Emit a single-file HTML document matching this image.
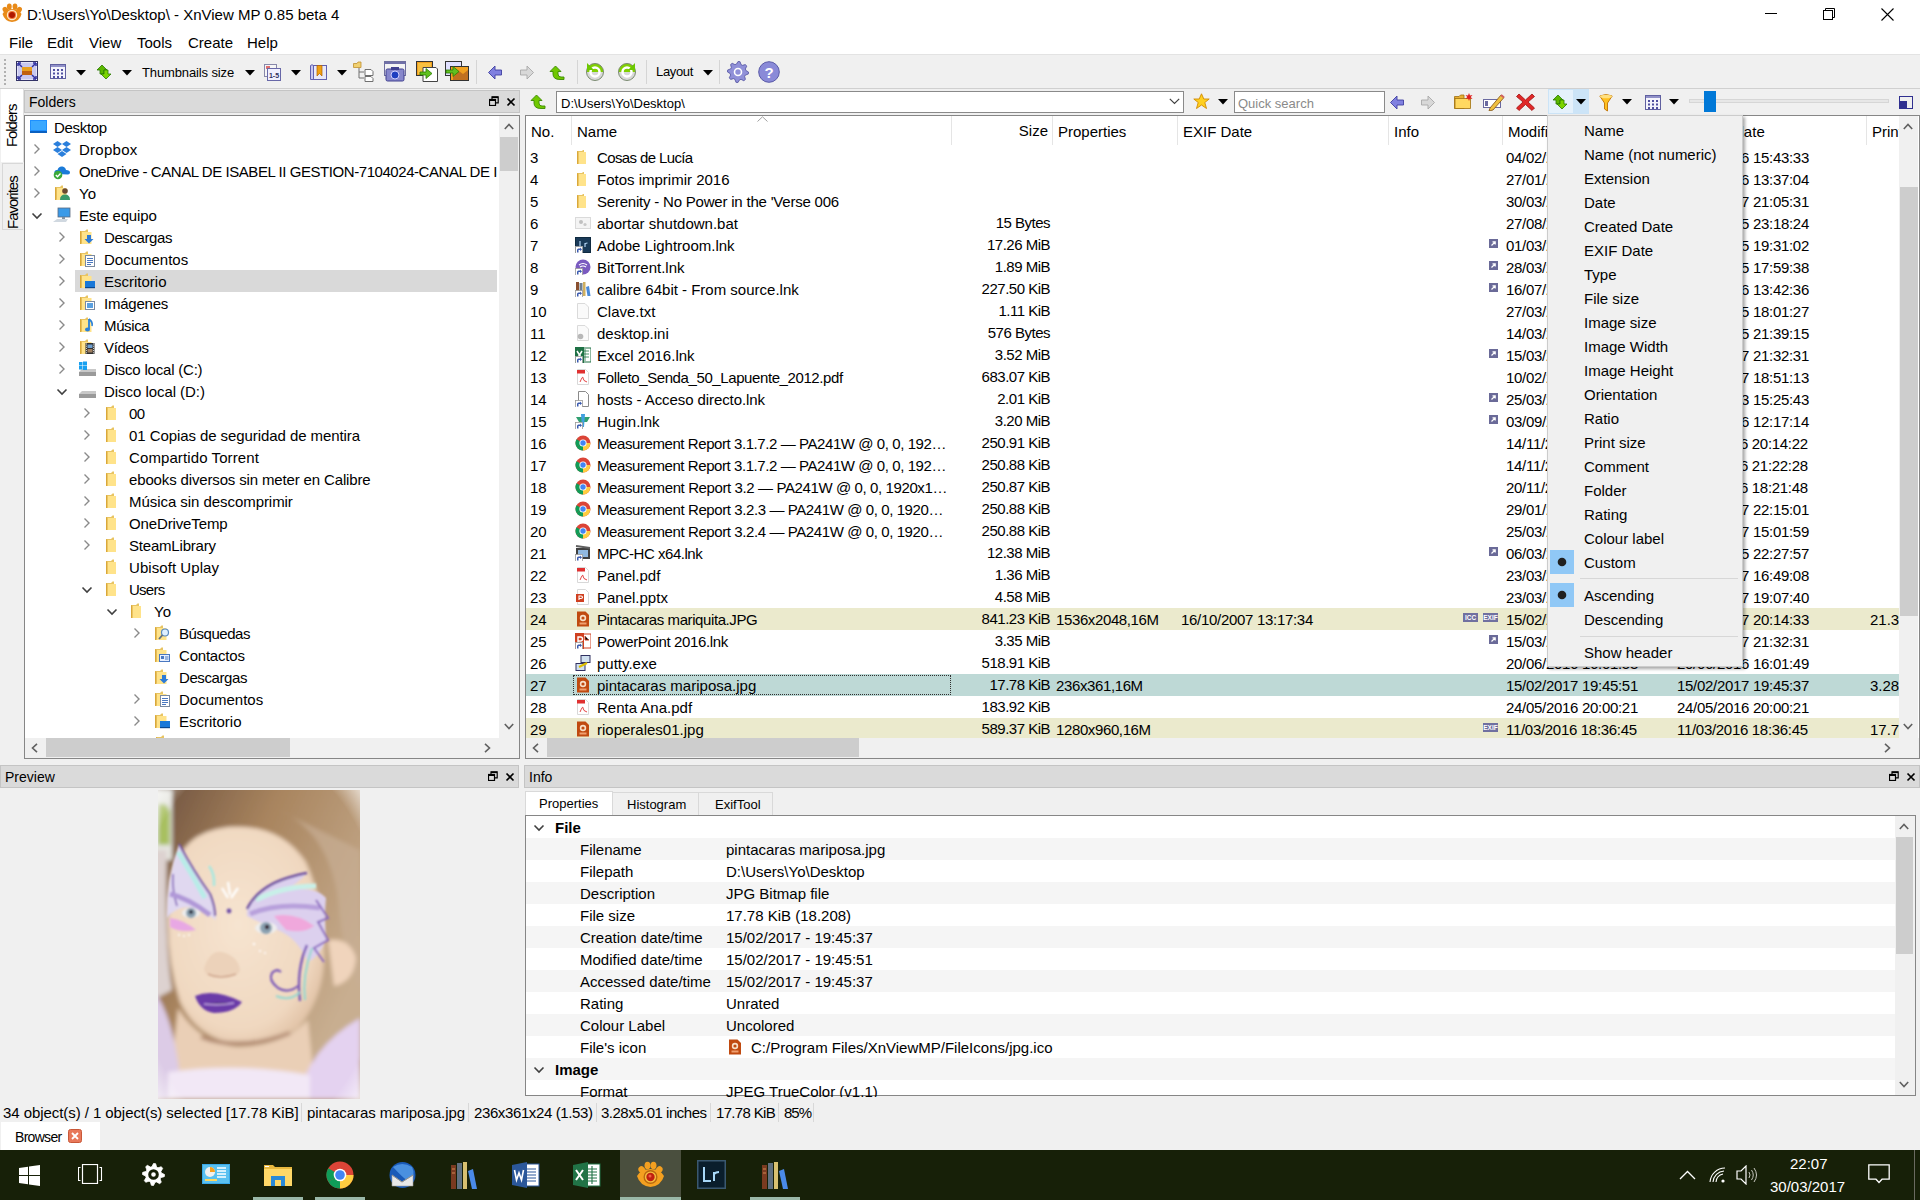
<!DOCTYPE html><html><head><meta charset="utf-8"><title>XnView MP</title><style>html,body{margin:0;padding:0;width:1920px;height:1200px;overflow:hidden;background:#f0f0f0;}body{position:relative;font-family:"Liberation Sans", sans-serif;}.t{position:absolute;white-space:nowrap;line-height:1;}.r{position:absolute;}</style></head><body><div class="r" style="left:0px;top:0px;width:1920px;height:54px;background:#fff;"></div><div class="r" style="left:0px;top:54px;width:1920px;height:1px;background:#e3e3e3;"></div><svg class="r" style="left:0px;top:0px" width="26" height="26" viewBox="0 0 26 26"><g fill="#e88a18"><ellipse cx="5.5" cy="10" rx="2.6" ry="3.4" transform="rotate(-35 5.5 10)"/><ellipse cx="9.3" cy="6.6" rx="2.4" ry="3.2"/><ellipse cx="15" cy="6.6" rx="2.4" ry="3.2"/><ellipse cx="19" cy="10" rx="2.6" ry="3.4" transform="rotate(35 19 10)"/><path d="M2.5 14Q5 9 12 9Q19 9 21.5 14Q20 21 12 22Q4.5 21 2.5 14Z"/></g><circle cx="12" cy="15" r="5.2" fill="#ffe8c8"/><circle cx="12" cy="15" r="4" fill="#f07838"/><circle cx="12" cy="15" r="3" fill="#b01800"/></svg><div class="t" style="left:27px;top:7px;font-size:15px;color:#000;">D:\Users\Yo\Desktop\ - XnView MP 0.85 beta 4</div><div class="r" style="left:1765px;top:13px;width:12px;height:1px;background:#000;"></div><svg class="r" style="left:1823px;top:8px" width="14" height="14" viewBox="0 0 14 14"><rect x="0.5" y="2.5" width="9" height="9" fill="none" stroke="#000"/><path d="M2.5 2.5V0.5H11.5V9.5H9.5" fill="none" stroke="#000"/></svg><svg class="r" style="left:1881px;top:8px" width="13" height="13" viewBox="0 0 13 13"><path d="M0.5 0.5L12.5 12.5M12.5 0.5L0.5 12.5" stroke="#000" stroke-width="1.1"/></svg><div class="t" style="left:9px;top:35px;font-size:15px;color:#000;">File</div><div class="t" style="left:47px;top:35px;font-size:15px;color:#000;">Edit</div><div class="t" style="left:89px;top:35px;font-size:15px;color:#000;">View</div><div class="t" style="left:137px;top:35px;font-size:15px;color:#000;">Tools</div><div class="t" style="left:188px;top:35px;font-size:15px;color:#000;">Create</div><div class="t" style="left:247px;top:35px;font-size:15px;color:#000;">Help</div><div class="r" style="left:0px;top:55px;width:1920px;height:33px;background:#f0f0f0;"></div><div class="r" style="left:0px;top:88px;width:1920px;height:1px;background:#d0d0d0;"></div><div class="r" style="left:4px;top:59px;width:2px;height:2px;background:#b0b0b0;"></div><div class="r" style="left:4px;top:63px;width:2px;height:2px;background:#b0b0b0;"></div><div class="r" style="left:4px;top:67px;width:2px;height:2px;background:#b0b0b0;"></div><div class="r" style="left:4px;top:71px;width:2px;height:2px;background:#b0b0b0;"></div><div class="r" style="left:4px;top:75px;width:2px;height:2px;background:#b0b0b0;"></div><div class="r" style="left:4px;top:79px;width:2px;height:2px;background:#b0b0b0;"></div><div class="r" style="left:4px;top:83px;width:2px;height:2px;background:#b0b0b0;"></div><svg class="r" style="left:16px;top:61px" width="22" height="20" viewBox="0 0 22 20"><rect x="0.5" y="0.5" width="21" height="19" fill="#fff" stroke="#333366"/><rect x="1.5" y="1.5" width="19" height="17" fill="#c8c8f0"/><rect x="6" y="6" width="10" height="8" fill="#e8a020"/><rect x="6" y="10" width="10" height="4" fill="#c06010"/><path d="M2 2L6 6M20 2L16 6M2 18L6 14M20 18L16 14" stroke="#3030a0" stroke-width="1.5"/><path d="M2 2h3M2 2v3M20 2h-3M20 2v3M2 18h3M2 18v-3M20 18h-3M20 18v-3" stroke="#3030a0" stroke-width="1.5"/></svg><svg class="r" style="left:50px;top:64px" width="16" height="15" viewBox="0 0 16 15"><rect x="0.5" y="0.5" width="15" height="14" fill="#f4f4fc" stroke="#6060a0"/><rect x="1" y="1" width="14" height="2" fill="#9090c8"/><rect x="3" y="5.0" width="2" height="2" fill="#5050a0"/><rect x="3" y="8.5" width="2" height="2" fill="#5050a0"/><rect x="3" y="12.0" width="2" height="2" fill="#5050a0"/><rect x="7" y="5.0" width="2" height="2" fill="#5050a0"/><rect x="7" y="8.5" width="2" height="2" fill="#5050a0"/><rect x="7" y="12.0" width="2" height="2" fill="#5050a0"/><rect x="11" y="5.0" width="2" height="2" fill="#5050a0"/><rect x="11" y="8.5" width="2" height="2" fill="#5050a0"/><rect x="11" y="12.0" width="2" height="2" fill="#5050a0"/></svg><svg class="r" style="left:76px;top:70px" width="10" height="6" viewBox="0 0 10 6"><path d="M0 0H10L5 5.5Z" fill="#000"/></svg><svg class="r" style="left:96px;top:64px" width="16" height="16" viewBox="0 0 16 16"><path d="M1 6L6 1L11 6H8V10H4V6Z" fill="#5cb800" stroke="#2a7a00" stroke-width="0.8"/><path d="M5 10L10 15L15 10H12V6H8V10Z" fill="#7cd400" stroke="#2a7a00" stroke-width="0.8"/></svg><svg class="r" style="left:122px;top:70px" width="10" height="6" viewBox="0 0 10 6"><path d="M0 0H10L5 5.5Z" fill="#000"/></svg><div class="t" style="left:142px;top:66px;font-size:13px;color:#000;letter-spacing:-0.129px;">Thumbnails size</div><svg class="r" style="left:245px;top:70px" width="10" height="6" viewBox="0 0 10 6"><path d="M0 0H10L5 5.5Z" fill="#000"/></svg><svg class="r" style="left:264px;top:64px" width="17" height="17" viewBox="0 0 17 17"><rect x="0.5" y="0.5" width="12" height="12" fill="#f6f6f6" stroke="#8888aa"/><rect x="2" y="2" width="4" height="3" fill="#e07070"/><rect x="3.5" y="4.5" width="13" height="12" fill="#f0f0ff" stroke="#6868a8"/><text x="10" y="14" font-size="7" font-family="Liberation Sans" font-weight="bold" text-anchor="middle" fill="#303060">1-5</text></svg><svg class="r" style="left:291px;top:70px" width="10" height="6" viewBox="0 0 10 6"><path d="M0 0H10L5 5.5Z" fill="#000"/></svg><svg class="r" style="left:310px;top:64px" width="17" height="16" viewBox="0 0 17 16"><path d="M0.5 1.5Q2 0 3.5 1.5V15.5H0.5Z" fill="#c8c8f0" stroke="#6060b0"/><rect x="3.5" y="1.5" width="13" height="14" fill="#e8e8f8" stroke="#6060b0"/><path d="M7 1.5V12L9.5 9.5L12 12V1.5Z" fill="#f0a010" stroke="#b06000" stroke-width="0.7"/></svg><svg class="r" style="left:337px;top:70px" width="10" height="6" viewBox="0 0 10 6"><path d="M0 0H10L5 5.5Z" fill="#000"/></svg><svg class="r" style="left:353px;top:61px" width="22" height="21" viewBox="0 0 22 21"><path d="M0.5 2.5H4L5 1H8V6.5H0.5Z" fill="#f0d070" stroke="#c09030" stroke-width="0.8"/><path d="M6 7V17H11M6 11H11" fill="none" stroke="#707070"/><path d="M12 8.5H18L20 10.5V14.5H12Z" fill="#fff" stroke="#707070"/><path d="M12 15.5H18L20 17.5V20.5H12Z" fill="#fff" stroke="#707070"/></svg><svg class="r" style="left:384px;top:61px" width="22" height="21" viewBox="0 0 22 21"><rect x="0.5" y="0.5" width="21" height="14" fill="#f4f4f4" stroke="#7070a0"/><rect x="1" y="1" width="20" height="2" fill="#7070a8"/><rect x="2" y="8" width="18" height="12" rx="1.5" fill="#8888cc" stroke="#404090"/><rect x="7" y="6" width="8" height="3" fill="#404090"/><circle cx="11" cy="14" r="4" fill="#2040c0" stroke="#d0d0ff"/></svg><svg class="r" style="left:416px;top:61px" width="22" height="21" viewBox="0 0 22 21"><rect x="0.5" y="0.5" width="16" height="14" fill="#f0a020" stroke="#333"/><rect x="2" y="2" width="13" height="11" fill="#f8c040"/><path d="M7 6.5H20L21.5 8V20.5H7Z" fill="#fff" stroke="#444"/><path d="M4 11H10V7.5L16 12.5L10 17.5V14H4Z" fill="#60c020" stroke="#2a7a00" stroke-width="0.8"/></svg><svg class="r" style="left:445px;top:61px" width="25" height="21" viewBox="0 0 25 21"><rect x="0.5" y="0.5" width="16" height="14" fill="#e0e0ff" stroke="#333"/><rect x="5.5" y="5.5" width="18" height="14" fill="#f0a020" stroke="#333"/><path d="M8 16L14 10L18 13L23 9V19H8Z" fill="#c07020"/><path d="M1 9H8V5.5L14 10.5L8 15.5V12H1Z" fill="#60c020" stroke="#2a7a00" stroke-width="0.8"/></svg><div class="r" style="left:476px;top:60px;width:1px;height:24px;background:#d5d5d5;"></div><svg class="r" style="left:488px;top:65px" width="14" height="15" viewBox="0 0 14 15"><path d="M0.5 7.5L7 1V5H13.5V10H7V14Z" fill="#8080e0" stroke="#4040a0" stroke-width="0.9"/></svg><svg class="r" style="left:520px;top:65px" width="14" height="15" viewBox="0 0 14 15"><path d="M13.5 7.5L7 1V5H0.5V10H7V14Z" fill="#d8d8d8" stroke="#a8a8a8" stroke-width="0.9"/></svg><svg class="r" style="left:549px;top:65px" width="16" height="15" viewBox="0 0 16 15"><path d="M1 6.5L6.5 1L12 6.5H9V9Q9 12 12 12H15V14.5H11Q4 14.5 4 9V6.5Z" fill="#70c800" stroke="#3a8a00" stroke-width="0.9"/></svg><div class="r" style="left:577px;top:60px;width:1px;height:24px;background:#d5d5d5;"></div><svg class="r" style="left:585px;top:62px" width="20" height="20" viewBox="0 0 20 20"><defs><linearGradient id="rg585" x1="0" y1="0" x2="0" y2="1"><stop offset="0.5" stop-color="#80d000"/><stop offset="0.5" stop-color="#d8d8d8"/></linearGradient></defs><circle cx="10" cy="10" r="8.5" fill="url(#rg585)" stroke="#7a8a70"/><circle cx="10" cy="10" r="4.5" fill="none" stroke="#fff" stroke-width="2.5"/><path d="M2 1V8H9Z" fill="#6cc800"/></svg><svg class="r" style="left:617px;top:62px" width="20" height="20" viewBox="0 0 20 20"><defs><linearGradient id="rg617" x1="0" y1="0" x2="0" y2="1"><stop offset="0.5" stop-color="#80d000"/><stop offset="0.5" stop-color="#d8d8d8"/></linearGradient></defs><circle cx="10" cy="10" r="8.5" fill="url(#rg617)" stroke="#7a8a70"/><circle cx="10" cy="10" r="4.5" fill="none" stroke="#fff" stroke-width="2.5"/><path d="M18 1V8H11Z" fill="#6cc800"/></svg><div class="r" style="left:646px;top:60px;width:1px;height:24px;background:#d5d5d5;"></div><div class="t" style="left:656px;top:65px;font-size:13px;color:#000;letter-spacing:-0.341px;">Layout</div><svg class="r" style="left:703px;top:70px" width="10" height="6" viewBox="0 0 10 6"><path d="M0 0H10L5 5.5Z" fill="#000"/></svg><div class="r" style="left:719px;top:60px;width:1px;height:24px;background:#d5d5d5;"></div><svg class="r" style="left:727px;top:61px" width="22" height="22" viewBox="0 0 22 22"><polygon points="21.50,11.00 21.30,13.05 18.39,14.06 17.65,15.44 18.42,18.42 16.83,19.73 14.06,18.39 12.56,18.85 11.00,21.50 8.95,21.30 7.94,18.39 6.56,17.65 3.58,18.42 2.27,16.83 3.61,14.06 3.15,12.56 0.50,11.00 0.70,8.95 3.61,7.94 4.35,6.56 3.58,3.58 5.17,2.27 7.94,3.61 9.44,3.15 11.00,0.50 13.05,0.70 14.06,3.61 15.44,4.35 18.42,3.58 19.73,5.17 18.39,7.94 18.85,9.44" fill="#9090d8" stroke="#5050a0" stroke-width="0.8"/><circle cx="11" cy="11" r="3.5" fill="none" stroke="#fff" stroke-width="1.6"/></svg><svg class="r" style="left:758px;top:61px" width="22" height="22" viewBox="0 0 22 22"><circle cx="11" cy="11" r="10.3" fill="#8a8ad8" stroke="#5a5aa8"/><text x="11" y="16.5" font-size="15" font-weight="bold" font-family="Liberation Sans" text-anchor="middle" fill="#fff">?</text></svg><div class="r" style="left:1px;top:89px;width:23px;height:73px;background:#fff;"></div><div class="r" style="left:23px;top:89px;width:1px;height:73px;background:#e0e0e0;"></div><div class="r" style="left:2px;top:163px;width:21px;height:67px;background:#f0f0f0;border:1px solid #d8d8d8;border-right:none;box-sizing:border-box;"></div><div class="t" style="left:4px;top:147px;font-size:15px;letter-spacing:-1.1px;transform:rotate(-90deg);transform-origin:0 0;">Folders</div><div class="t" style="left:5px;top:229px;font-size:15px;letter-spacing:-1px;transform:rotate(-90deg);transform-origin:0 0;">Favorites</div><div class="r" style="left:24px;top:90px;width:496px;height:23px;background:#dadada;border:1px solid #c4c4c4;box-sizing:border-box;"></div><div class="t" style="left:29px;top:95px;font-size:14px;color:#000;">Folders</div><svg class="r" style="left:489px;top:96px" width="10" height="10" viewBox="0 0 10 10"><rect x="0.5" y="3.5" width="6" height="6" fill="none" stroke="#000" stroke-width="1.2"/><path d="M3 3.5V0.8H9.2V6.8H6.5" fill="none" stroke="#000" stroke-width="1.2"/><rect x="0.5" y="3.5" width="6" height="1.5" fill="#000"/><rect x="3" y="0.6" width="6" height="1.5" fill="#000"/></svg><svg class="r" style="left:506px;top:97px" width="10" height="10" viewBox="0 0 10 10"><path d="M1.5 1.5L8.5 8.5M8.5 1.5L1.5 8.5" stroke="#000" stroke-width="1.7"/></svg><div class="r" style="left:24px;top:115px;width:496px;height:644px;background:#fff;border:1px solid #868686;box-sizing:border-box;"></div><div class="r" style="left:499px;top:116px;width:20px;height:622px;background:#f0f0f0;"></div><svg class="r" style="left:504px;top:123px" width="10" height="7" viewBox="0 0 10 7"><path d="M0.8 6L5 1.5L9.2 6" fill="none" stroke="#606060" stroke-width="1.6"/></svg><div class="r" style="left:500px;top:137px;width:18px;height:34px;background:#cdcdcd;"></div><svg class="r" style="left:504px;top:723px" width="10" height="7" viewBox="0 0 10 7"><path d="M0.8 1L5 5.5L9.2 1" fill="none" stroke="#606060" stroke-width="1.6"/></svg><div class="r" style="left:25px;top:738px;width:474px;height:20px;background:#f0f0f0;"></div><div class="r" style="left:499px;top:738px;width:20px;height:20px;background:#f0f0f0;"></div><div class="r" style="left:46px;top:738px;width:244px;height:19px;background:#cdcdcd;"></div><svg class="r" style="left:31px;top:743px" width="7" height="10" viewBox="0 0 7 10"><path d="M6 0.8L1.5 5L6 9.2" fill="none" stroke="#606060" stroke-width="1.6"/></svg><svg class="r" style="left:484px;top:743px" width="7" height="10" viewBox="0 0 7 10"><path d="M1 0.8L5.5 5L1 9.2" fill="none" stroke="#606060" stroke-width="1.6"/></svg><div class="r" style="left:25px;top:116px;width:474px;height:622px;overflow:hidden;"><svg class="r" style="left:5px;top:4px" width="17" height="13" viewBox="0 0 17 13"><rect x="0" y="0" width="17" height="12" fill="#1e90ff"/><rect x="1" y="1" width="15" height="9" fill="#3aa8ff"/><rect x="0" y="11" width="17" height="2" fill="#0a60c0"/></svg><div class="t" style="left:29px;top:4px;font-size:15px;color:#000;letter-spacing:-0.319px;">Desktop</div><svg class="r" style="left:8px;top:27px" width="8" height="12" viewBox="0 0 8 12"><path d="M1.5 1.5L6 6L1.5 10.5" fill="none" stroke="#8a8a8a" stroke-width="1.4"/></svg><svg class="r" style="left:28px;top:24px" width="18" height="18" viewBox="0 0 18 18"><g fill="#2a7fdc"><path d="M4.5 1L0 4L4.5 7L9 4Z"/><path d="M13.5 1L9 4L13.5 7L18 4Z"/><path d="M4.5 7L0 10L4.5 13L9 10Z"/><path d="M13.5 7L9 10L13.5 13L18 10Z"/><path d="M4.5 14L9 11L13.5 14L9 17Z"/></g></svg><div class="t" style="left:54px;top:26px;font-size:15px;color:#000;letter-spacing:0.257px;">Dropbox</div><svg class="r" style="left:8px;top:49px" width="8" height="12" viewBox="0 0 8 12"><path d="M1.5 1.5L6 6L1.5 10.5" fill="none" stroke="#8a8a8a" stroke-width="1.4"/></svg><svg class="r" style="left:28px;top:46px" width="18" height="18" viewBox="0 0 18 18"><path d="M3 12Q1 12 1.5 9.5Q2 7.5 4.5 8Q5.5 4 9.5 4.5Q12.5 5 13 8Q17 8 17 10.5Q17 12.5 15 12.5Z" fill="#1a7ad8"/><circle cx="5" cy="13" r="4.3" fill="#3aa83a"/><path d="M2.8 13L4.5 14.8L7.5 11.5" fill="none" stroke="#fff" stroke-width="1.3"/></svg><div class="t" style="left:54px;top:48px;font-size:15px;color:#000;letter-spacing:-0.44px;">OneDrive - CANAL DE ISABEL II GESTION-7104024-CANAL DE I</div><svg class="r" style="left:8px;top:71px" width="8" height="12" viewBox="0 0 8 12"><path d="M1.5 1.5L6 6L1.5 10.5" fill="none" stroke="#8a8a8a" stroke-width="1.4"/></svg><svg class="r" style="left:28px;top:68px" width="17" height="17" viewBox="0 0 17 17"><path d="M2 3H7L8.5 1.5H10V15.5H2Z" fill="#e8c462"/><path d="M3.5 4H13.5V16H3.5Z" fill="#ffe38a"/><path d="M2 3V16H3.5V4Z" fill="#d9a83a"/><circle cx="12" cy="7" r="2.8" fill="#6a4a30"/><path d="M7 16Q7 10.5 12 10.5Q17 10.5 17 16Z" fill="#3a9a6a"/></svg><div class="t" style="left:54px;top:70px;font-size:15px;color:#000;">Yo</div><svg class="r" style="left:6px;top:96px" width="12" height="8" viewBox="0 0 12 8"><path d="M1.5 1.5L6 6L10.5 1.5" fill="none" stroke="#404040" stroke-width="1.6"/></svg><svg class="r" style="left:28px;top:90px" width="18" height="18" viewBox="0 0 18 18"><rect x="5" y="2" width="12" height="9" fill="#3a9ae8" stroke="#5a6a80" stroke-width="0.8"/><rect x="9" y="11" width="3" height="2" fill="#8090a0"/><path d="M0 16L4 13H15L13 16Z" fill="#d0d8e0"/></svg><div class="t" style="left:54px;top:92px;font-size:15px;color:#000;letter-spacing:-0.149px;">Este equipo</div><svg class="r" style="left:33px;top:115px" width="8" height="12" viewBox="0 0 8 12"><path d="M1.5 1.5L6 6L1.5 10.5" fill="none" stroke="#8a8a8a" stroke-width="1.4"/></svg><svg class="r" style="left:53px;top:112px" width="17" height="17" viewBox="0 0 17 17"><path d="M2 3H7L8.5 1.5H10V15.5H2Z" fill="#e8c462"/><path d="M3.5 4H13.5V16H3.5Z" fill="#ffe38a"/><path d="M2 3V16H3.5V4Z" fill="#d9a83a"/><path d="M9 7H13V11H15.5L11 15.5L6.5 11H9Z" fill="#2e7bd6"/></svg><div class="t" style="left:79px;top:114px;font-size:15px;color:#000;letter-spacing:-0.411px;">Descargas</div><svg class="r" style="left:33px;top:137px" width="8" height="12" viewBox="0 0 8 12"><path d="M1.5 1.5L6 6L1.5 10.5" fill="none" stroke="#8a8a8a" stroke-width="1.4"/></svg><svg class="r" style="left:53px;top:134px" width="17" height="17" viewBox="0 0 17 17"><path d="M2 3H7L8.5 1.5H10V15.5H2Z" fill="#e8c462"/><path d="M3.5 4H13.5V16H3.5Z" fill="#ffe38a"/><path d="M2 3V16H3.5V4Z" fill="#d9a83a"/><rect x="7.5" y="5.5" width="9" height="11" fill="#fff" stroke="#7a8aa0"/><path d="M9 8.5h6M9 10.5h6M9 12.5h6M9 14.5h4" stroke="#4a78c0"/></svg><div class="t" style="left:79px;top:136px;font-size:15px;color:#000;">Documentos</div><div class="r" style="left:50px;top:154px;width:422px;height:22px;background:#d9d9d9;"></div><svg class="r" style="left:33px;top:159px" width="8" height="12" viewBox="0 0 8 12"><path d="M1.5 1.5L6 6L1.5 10.5" fill="none" stroke="#8a8a8a" stroke-width="1.4"/></svg><svg class="r" style="left:53px;top:156px" width="17" height="17" viewBox="0 0 17 17"><path d="M2 3H7L8.5 1.5H10V15.5H2Z" fill="#e8c462"/><path d="M3.5 4H13.5V16H3.5Z" fill="#ffe38a"/><path d="M2 3V16H3.5V4Z" fill="#d9a83a"/><rect x="7" y="9" width="10" height="7" fill="#1a78d8"/><rect x="7" y="15" width="10" height="1.2" fill="#0a4890"/></svg><div class="t" style="left:79px;top:158px;font-size:15px;color:#000;">Escritorio</div><svg class="r" style="left:33px;top:181px" width="8" height="12" viewBox="0 0 8 12"><path d="M1.5 1.5L6 6L1.5 10.5" fill="none" stroke="#8a8a8a" stroke-width="1.4"/></svg><svg class="r" style="left:53px;top:178px" width="17" height="17" viewBox="0 0 17 17"><path d="M2 3H7L8.5 1.5H10V15.5H2Z" fill="#e8c462"/><path d="M3.5 4H13.5V16H3.5Z" fill="#ffe38a"/><path d="M2 3V16H3.5V4Z" fill="#d9a83a"/><rect x="7.5" y="7.5" width="9" height="8" fill="#fff" stroke="#7a8aa0"/><rect x="9" y="9" width="6" height="5" fill="#5aa0e0"/></svg><div class="t" style="left:79px;top:180px;font-size:15px;color:#000;letter-spacing:-0.234px;">Imágenes</div><svg class="r" style="left:33px;top:203px" width="8" height="12" viewBox="0 0 8 12"><path d="M1.5 1.5L6 6L1.5 10.5" fill="none" stroke="#8a8a8a" stroke-width="1.4"/></svg><svg class="r" style="left:53px;top:200px" width="17" height="17" viewBox="0 0 17 17"><path d="M2 3H7L8.5 1.5H10V15.5H2Z" fill="#e8c462"/><path d="M3.5 4H13.5V16H3.5Z" fill="#ffe38a"/><path d="M2 3V16H3.5V4Z" fill="#d9a83a"/><path d="M11 3V13" stroke="#2a80d8" stroke-width="1.8"/><ellipse cx="9.5" cy="13.5" rx="2.5" ry="2" fill="#2a80d8"/><path d="M11 3Q15 6 14 10" fill="none" stroke="#2a80d8" stroke-width="1.6"/></svg><div class="t" style="left:79px;top:202px;font-size:15px;color:#000;letter-spacing:-0.369px;">Música</div><svg class="r" style="left:33px;top:225px" width="8" height="12" viewBox="0 0 8 12"><path d="M1.5 1.5L6 6L1.5 10.5" fill="none" stroke="#8a8a8a" stroke-width="1.4"/></svg><svg class="r" style="left:53px;top:222px" width="17" height="17" viewBox="0 0 17 17"><path d="M2 3H7L8.5 1.5H10V15.5H2Z" fill="#e8c462"/><path d="M3.5 4H13.5V16H3.5Z" fill="#ffe38a"/><path d="M2 3V16H3.5V4Z" fill="#d9a83a"/><rect x="7.5" y="5" width="9" height="11" fill="#303030"/><rect x="9.5" y="6.5" width="5" height="3.5" fill="#70a0d0"/><rect x="9.5" y="11" width="5" height="3.5" fill="#a08060"/><rect x="8" y="5.5" width="1" height="1" fill="#ddd"/><rect x="15" y="5.5" width="1" height="1" fill="#ddd"/><rect x="8" y="7.7" width="1" height="1" fill="#ddd"/><rect x="15" y="7.7" width="1" height="1" fill="#ddd"/><rect x="8" y="9.9" width="1" height="1" fill="#ddd"/><rect x="15" y="9.9" width="1" height="1" fill="#ddd"/><rect x="8" y="12.100000000000001" width="1" height="1" fill="#ddd"/><rect x="15" y="12.100000000000001" width="1" height="1" fill="#ddd"/><rect x="8" y="14.3" width="1" height="1" fill="#ddd"/><rect x="15" y="14.3" width="1" height="1" fill="#ddd"/></svg><div class="t" style="left:79px;top:224px;font-size:15px;color:#000;letter-spacing:-0.317px;">Vídeos</div><svg class="r" style="left:33px;top:247px" width="8" height="12" viewBox="0 0 8 12"><path d="M1.5 1.5L6 6L1.5 10.5" fill="none" stroke="#8a8a8a" stroke-width="1.4"/></svg><svg class="r" style="left:53px;top:244px" width="19" height="18" viewBox="0 0 19 18"><path d="M1 12L4 9H18V15H1Z" fill="#c8c8c8"/><path d="M1 12H18V16H1Z" fill="#9a9a9a"/><g fill="#18a0f0"><rect x="1" y="2" width="3.5" height="3.5"/><rect x="5" y="1.5" width="4" height="4"/><rect x="1" y="6" width="3.5" height="3.5"/><rect x="5" y="6" width="4" height="4"/></g></svg><div class="t" style="left:79px;top:246px;font-size:15px;color:#000;letter-spacing:-0.205px;">Disco local (C:)</div><svg class="r" style="left:31px;top:272px" width="12" height="8" viewBox="0 0 12 8"><path d="M1.5 1.5L6 6L10.5 1.5" fill="none" stroke="#404040" stroke-width="1.6"/></svg><svg class="r" style="left:53px;top:266px" width="19" height="18" viewBox="0 0 19 18"><path d="M1 12L4 9H18V15H1Z" fill="#c8c8c8"/><path d="M1 12H18V16H1Z" fill="#9a9a9a"/></svg><div class="t" style="left:79px;top:268px;font-size:15px;color:#000;letter-spacing:-0.049px;">Disco local (D:)</div><svg class="r" style="left:58px;top:291px" width="8" height="12" viewBox="0 0 8 12"><path d="M1.5 1.5L6 6L1.5 10.5" fill="none" stroke="#8a8a8a" stroke-width="1.4"/></svg><svg class="r" style="left:78px;top:288px" width="17" height="17" viewBox="0 0 17 17"><path d="M3 3H8L9.5 1.5H11V15.5H3Z" fill="#e8c462"/><path d="M4 4H13V16H4Z" fill="#ffe38a"/><path d="M3 3V16H4.5V4Z" fill="#d9a83a"/></svg><div class="t" style="left:104px;top:290px;font-size:15px;color:#000;letter-spacing:-0.544px;">00</div><svg class="r" style="left:58px;top:313px" width="8" height="12" viewBox="0 0 8 12"><path d="M1.5 1.5L6 6L1.5 10.5" fill="none" stroke="#8a8a8a" stroke-width="1.4"/></svg><svg class="r" style="left:78px;top:310px" width="17" height="17" viewBox="0 0 17 17"><path d="M3 3H8L9.5 1.5H11V15.5H3Z" fill="#e8c462"/><path d="M4 4H13V16H4Z" fill="#ffe38a"/><path d="M3 3V16H4.5V4Z" fill="#d9a83a"/></svg><div class="t" style="left:104px;top:312px;font-size:15px;color:#000;letter-spacing:-0.075px;">01 Copias de seguridad de mentira</div><svg class="r" style="left:58px;top:335px" width="8" height="12" viewBox="0 0 8 12"><path d="M1.5 1.5L6 6L1.5 10.5" fill="none" stroke="#8a8a8a" stroke-width="1.4"/></svg><svg class="r" style="left:78px;top:332px" width="17" height="17" viewBox="0 0 17 17"><path d="M3 3H8L9.5 1.5H11V15.5H3Z" fill="#e8c462"/><path d="M4 4H13V16H4Z" fill="#ffe38a"/><path d="M3 3V16H4.5V4Z" fill="#d9a83a"/></svg><div class="t" style="left:104px;top:334px;font-size:15px;color:#000;letter-spacing:0.104px;">Compartido Torrent</div><svg class="r" style="left:58px;top:357px" width="8" height="12" viewBox="0 0 8 12"><path d="M1.5 1.5L6 6L1.5 10.5" fill="none" stroke="#8a8a8a" stroke-width="1.4"/></svg><svg class="r" style="left:78px;top:354px" width="17" height="17" viewBox="0 0 17 17"><path d="M3 3H8L9.5 1.5H11V15.5H3Z" fill="#e8c462"/><path d="M4 4H13V16H4Z" fill="#ffe38a"/><path d="M3 3V16H4.5V4Z" fill="#d9a83a"/></svg><div class="t" style="left:104px;top:356px;font-size:15px;color:#000;letter-spacing:-0.147px;">ebooks diversos sin meter en Calibre</div><svg class="r" style="left:58px;top:379px" width="8" height="12" viewBox="0 0 8 12"><path d="M1.5 1.5L6 6L1.5 10.5" fill="none" stroke="#8a8a8a" stroke-width="1.4"/></svg><svg class="r" style="left:78px;top:376px" width="17" height="17" viewBox="0 0 17 17"><path d="M3 3H8L9.5 1.5H11V15.5H3Z" fill="#e8c462"/><path d="M4 4H13V16H4Z" fill="#ffe38a"/><path d="M3 3V16H4.5V4Z" fill="#d9a83a"/></svg><div class="t" style="left:104px;top:378px;font-size:15px;color:#000;letter-spacing:-0.054px;">Música sin descomprimir</div><svg class="r" style="left:58px;top:401px" width="8" height="12" viewBox="0 0 8 12"><path d="M1.5 1.5L6 6L1.5 10.5" fill="none" stroke="#8a8a8a" stroke-width="1.4"/></svg><svg class="r" style="left:78px;top:398px" width="17" height="17" viewBox="0 0 17 17"><path d="M3 3H8L9.5 1.5H11V15.5H3Z" fill="#e8c462"/><path d="M4 4H13V16H4Z" fill="#ffe38a"/><path d="M3 3V16H4.5V4Z" fill="#d9a83a"/></svg><div class="t" style="left:104px;top:400px;font-size:15px;color:#000;letter-spacing:-0.129px;">OneDriveTemp</div><svg class="r" style="left:58px;top:423px" width="8" height="12" viewBox="0 0 8 12"><path d="M1.5 1.5L6 6L1.5 10.5" fill="none" stroke="#8a8a8a" stroke-width="1.4"/></svg><svg class="r" style="left:78px;top:420px" width="17" height="17" viewBox="0 0 17 17"><path d="M3 3H8L9.5 1.5H11V15.5H3Z" fill="#e8c462"/><path d="M4 4H13V16H4Z" fill="#ffe38a"/><path d="M3 3V16H4.5V4Z" fill="#d9a83a"/></svg><div class="t" style="left:104px;top:422px;font-size:15px;color:#000;letter-spacing:-0.2px;">SteamLibrary</div><svg class="r" style="left:78px;top:442px" width="17" height="17" viewBox="0 0 17 17"><path d="M3 3H8L9.5 1.5H11V15.5H3Z" fill="#e8c462"/><path d="M4 4H13V16H4Z" fill="#ffe38a"/><path d="M3 3V16H4.5V4Z" fill="#d9a83a"/></svg><div class="t" style="left:104px;top:444px;font-size:15px;color:#000;letter-spacing:0.061px;">Ubisoft Uplay</div><svg class="r" style="left:56px;top:470px" width="12" height="8" viewBox="0 0 12 8"><path d="M1.5 1.5L6 6L10.5 1.5" fill="none" stroke="#404040" stroke-width="1.6"/></svg><svg class="r" style="left:78px;top:464px" width="17" height="17" viewBox="0 0 17 17"><path d="M3 3H8L9.5 1.5H11V15.5H3Z" fill="#e8c462"/><path d="M4 4H13V16H4Z" fill="#ffe38a"/><path d="M3 3V16H4.5V4Z" fill="#d9a83a"/></svg><div class="t" style="left:104px;top:466px;font-size:15px;color:#000;letter-spacing:-0.734px;">Users</div><svg class="r" style="left:81px;top:492px" width="12" height="8" viewBox="0 0 12 8"><path d="M1.5 1.5L6 6L10.5 1.5" fill="none" stroke="#404040" stroke-width="1.6"/></svg><svg class="r" style="left:103px;top:486px" width="17" height="17" viewBox="0 0 17 17"><path d="M3 3H8L9.5 1.5H11V15.5H3Z" fill="#e8c462"/><path d="M4 4H13V16H4Z" fill="#ffe38a"/><path d="M3 3V16H4.5V4Z" fill="#d9a83a"/></svg><div class="t" style="left:129px;top:488px;font-size:15px;color:#000;">Yo</div><svg class="r" style="left:108px;top:511px" width="8" height="12" viewBox="0 0 8 12"><path d="M1.5 1.5L6 6L1.5 10.5" fill="none" stroke="#8a8a8a" stroke-width="1.4"/></svg><svg class="r" style="left:128px;top:508px" width="17" height="17" viewBox="0 0 17 17"><path d="M2 3H7L8.5 1.5H10V15.5H2Z" fill="#e8c462"/><path d="M3.5 4H13.5V16H3.5Z" fill="#ffe38a"/><path d="M2 3V16H3.5V4Z" fill="#d9a83a"/><circle cx="12" cy="8.5" r="3.5" fill="#dff0ff" stroke="#5a8ac0" stroke-width="1.2"/><path d="M9.5 11L6 15" stroke="#607080" stroke-width="1.8"/></svg><div class="t" style="left:154px;top:510px;font-size:15px;color:#000;letter-spacing:-0.451px;">Búsquedas</div><svg class="r" style="left:128px;top:530px" width="17" height="17" viewBox="0 0 17 17"><path d="M2 3H7L8.5 1.5H10V15.5H2Z" fill="#e8c462"/><path d="M3.5 4H13.5V16H3.5Z" fill="#ffe38a"/><path d="M2 3V16H3.5V4Z" fill="#d9a83a"/><rect x="6.5" y="8.5" width="10" height="7" fill="#e8f0ff" stroke="#4a78c0"/><rect x="8" y="10" width="3" height="3" fill="#4a78c0"/><path d="M12 11h3.5M12 13h3.5" stroke="#4a78c0"/></svg><div class="t" style="left:154px;top:532px;font-size:15px;color:#000;letter-spacing:-0.205px;">Contactos</div><svg class="r" style="left:128px;top:552px" width="17" height="17" viewBox="0 0 17 17"><path d="M2 3H7L8.5 1.5H10V15.5H2Z" fill="#e8c462"/><path d="M3.5 4H13.5V16H3.5Z" fill="#ffe38a"/><path d="M2 3V16H3.5V4Z" fill="#d9a83a"/><path d="M9 7H13V11H15.5L11 15.5L6.5 11H9Z" fill="#2e7bd6"/></svg><div class="t" style="left:154px;top:554px;font-size:15px;color:#000;letter-spacing:-0.411px;">Descargas</div><svg class="r" style="left:108px;top:577px" width="8" height="12" viewBox="0 0 8 12"><path d="M1.5 1.5L6 6L1.5 10.5" fill="none" stroke="#8a8a8a" stroke-width="1.4"/></svg><svg class="r" style="left:128px;top:574px" width="17" height="17" viewBox="0 0 17 17"><path d="M2 3H7L8.5 1.5H10V15.5H2Z" fill="#e8c462"/><path d="M3.5 4H13.5V16H3.5Z" fill="#ffe38a"/><path d="M2 3V16H3.5V4Z" fill="#d9a83a"/><rect x="7.5" y="5.5" width="9" height="11" fill="#fff" stroke="#7a8aa0"/><path d="M9 8.5h6M9 10.5h6M9 12.5h6M9 14.5h4" stroke="#4a78c0"/></svg><div class="t" style="left:154px;top:576px;font-size:15px;color:#000;">Documentos</div><svg class="r" style="left:108px;top:599px" width="8" height="12" viewBox="0 0 8 12"><path d="M1.5 1.5L6 6L1.5 10.5" fill="none" stroke="#8a8a8a" stroke-width="1.4"/></svg><svg class="r" style="left:128px;top:596px" width="17" height="17" viewBox="0 0 17 17"><path d="M2 3H7L8.5 1.5H10V15.5H2Z" fill="#e8c462"/><path d="M3.5 4H13.5V16H3.5Z" fill="#ffe38a"/><path d="M2 3V16H3.5V4Z" fill="#d9a83a"/><rect x="7" y="9" width="10" height="7" fill="#1a78d8"/><rect x="7" y="15" width="10" height="1.2" fill="#0a4890"/></svg><div class="t" style="left:154px;top:598px;font-size:15px;color:#000;">Escritorio</div><svg class="r" style="left:128px;top:618px" width="17" height="17" viewBox="0 0 17 17"><path d="M3 3H8L9.5 1.5H11V15.5H3Z" fill="#e8c462"/><path d="M4 4H13V16H4Z" fill="#ffe38a"/><path d="M3 3V16H4.5V4Z" fill="#d9a83a"/></svg></div><svg class="r" style="left:530px;top:94px" width="16" height="15" viewBox="0 0 16 15"><path d="M1 6.5L6.5 1L12 6.5H9V9Q9 12 12 12H15V14.5H11Q4 14.5 4 9V6.5Z" fill="#70c800" stroke="#3a8a00" stroke-width="0.9"/></svg><div class="r" style="left:556px;top:91px;width:628px;height:22px;background:#fff;border:1px solid #8a8a8a;box-sizing:border-box;"></div><div class="t" style="left:561px;top:97px;font-size:13px;color:#000;">D:\Users\Yo\Desktop\</div><svg class="r" style="left:1169px;top:98px" width="11" height="7" viewBox="0 0 11 7"><path d="M0.8 0.8L5.5 5.5L10.2 0.8" fill="none" stroke="#404040" stroke-width="1.2"/></svg><svg class="r" style="left:1193px;top:93px" width="17" height="17" viewBox="0 0 17 17"><path d="M8.5 0.8L10.8 6H16.2L11.8 9.5L13.5 15.5L8.5 12L3.5 15.5L5.2 9.5L0.8 6H6.2Z" fill="#ffd020" stroke="#d08a00" stroke-width="0.9"/></svg><svg class="r" style="left:1218px;top:99px" width="10" height="6" viewBox="0 0 10 6"><path d="M0 0H10L5 5.5Z" fill="#000"/></svg><div class="r" style="left:1234px;top:91px;width:151px;height:22px;background:#fff;border:1px solid #8a8a8a;box-sizing:border-box;"></div><div class="t" style="left:1238px;top:97px;font-size:13px;color:#8a8a8a;">Quick search</div><svg class="r" style="left:1390px;top:95px" width="14" height="15" viewBox="0 0 14 15"><path d="M0.5 7.5L7 1V5H13.5V10H7V14Z" fill="#8080e0" stroke="#4040a0" stroke-width="0.9"/></svg><svg class="r" style="left:1421px;top:95px" width="14" height="15" viewBox="0 0 14 15"><path d="M13.5 7.5L7 1V5H0.5V10H7V14Z" fill="#d8d8d8" stroke="#a8a8a8" stroke-width="0.9"/></svg><svg class="r" style="left:1454px;top:93px" width="19" height="17" viewBox="0 0 19 17"><path d="M0.5 3.5H5L6.5 2H10V15.5H0.5Z" fill="#e8b030" stroke="#a07010" stroke-width="0.8"/><rect x="1" y="5.5" width="15.5" height="10" fill="#ffd860" stroke="#a07010" stroke-width="0.8"/><path d="M15 0L16 2.5L18.5 2L16.8 4L18.5 6L16 5.5L15 8L14 5.5L11.5 6L13.2 4L11.5 2L14 2.5Z" fill="#e02020"/></svg><svg class="r" style="left:1483px;top:93px" width="22" height="18" viewBox="0 0 22 18"><rect x="0.5" y="6.5" width="17" height="8" fill="#fff" stroke="#6a6aa0"/><rect x="2" y="8" width="3" height="5" fill="#6a6aa0"/><path d="M7 15L18 2L21 4.5L10 17L6 18Z" fill="#f0c040" stroke="#805010" stroke-width="0.8"/><path d="M18 2L21 4.5" stroke="#d06060" stroke-width="2"/></svg><svg class="r" style="left:1516px;top:93px" width="19" height="18" viewBox="0 0 19 18"><path d="M3 1L9.5 7L16 1L18.5 3.5L12 9L18.5 15L16 17.5L9.5 11.5L3 17.5L0.5 15L7 9L0.5 3.5Z" fill="#e02828" stroke="#a01010" stroke-width="0.8"/></svg><div class="r" style="left:1548px;top:89px;width:41px;height:25px;background:#e5f1fb;border:1px solid #cce4f7;box-sizing:border-box;"></div><div class="r" style="left:1573px;top:89px;width:16px;height:25px;background:#cce4f7;"></div><svg class="r" style="left:1552px;top:94px" width="16" height="16" viewBox="0 0 16 16"><path d="M1 6L6 1L11 6H8V10H4V6Z" fill="#5cb800" stroke="#2a7a00" stroke-width="0.8"/><path d="M5 10L10 15L15 10H12V6H8V10Z" fill="#7cd400" stroke="#2a7a00" stroke-width="0.8"/></svg><svg class="r" style="left:1576px;top:99px" width="10" height="6" viewBox="0 0 10 6"><path d="M0 0H10L5 5.5Z" fill="#000"/></svg><svg class="r" style="left:1599px;top:94px" width="14" height="19" viewBox="0 0 14 19"><path d="M0.8 2Q7 -1 13.2 2L8.5 9V17L5.5 15V9Z" fill="#ffc020" stroke="#c07000" stroke-width="0.9"/><ellipse cx="7" cy="2.5" rx="6" ry="1.8" fill="#ffe080"/></svg><svg class="r" style="left:1622px;top:99px" width="10" height="6" viewBox="0 0 10 6"><path d="M0 0H10L5 5.5Z" fill="#000"/></svg><svg class="r" style="left:1645px;top:95px" width="16" height="15" viewBox="0 0 16 15"><rect x="0.5" y="0.5" width="15" height="14" fill="#f4f4fc" stroke="#6060a0"/><rect x="1" y="1" width="14" height="2" fill="#9090c8"/><rect x="3" y="5.0" width="2" height="2" fill="#5050a0"/><rect x="3" y="8.5" width="2" height="2" fill="#5050a0"/><rect x="3" y="12.0" width="2" height="2" fill="#5050a0"/><rect x="7" y="5.0" width="2" height="2" fill="#5050a0"/><rect x="7" y="8.5" width="2" height="2" fill="#5050a0"/><rect x="7" y="12.0" width="2" height="2" fill="#5050a0"/><rect x="11" y="5.0" width="2" height="2" fill="#5050a0"/><rect x="11" y="8.5" width="2" height="2" fill="#5050a0"/><rect x="11" y="12.0" width="2" height="2" fill="#5050a0"/></svg><svg class="r" style="left:1669px;top:99px" width="10" height="6" viewBox="0 0 10 6"><path d="M0 0H10L5 5.5Z" fill="#000"/></svg><div class="r" style="left:1689px;top:99px;width:200px;height:4px;background:#e7e7e7;border:1px solid #d6d6d6;box-sizing:border-box;"></div><div class="r" style="left:1704px;top:91px;width:12px;height:21px;background:#0078d7;"></div><svg class="r" style="left:1899px;top:96px" width="14" height="13" viewBox="0 0 14 13"><rect x="0.5" y="0.5" width="13" height="12" fill="none" stroke="#303090"/><rect x="0" y="5" width="8" height="8" fill="#303090"/></svg><div class="r" style="left:525px;top:115px;width:1395px;height:644px;background:#fff;border:1px solid #868686;box-sizing:border-box;"></div><div class="r" style="left:571px;top:116px;width:1px;height:29px;background:#e5e5e5;"></div><div class="r" style="left:951px;top:116px;width:1px;height:29px;background:#e5e5e5;"></div><div class="r" style="left:1052px;top:116px;width:1px;height:29px;background:#e5e5e5;"></div><div class="r" style="left:1177px;top:116px;width:1px;height:29px;background:#e5e5e5;"></div><div class="r" style="left:1388px;top:116px;width:1px;height:29px;background:#e5e5e5;"></div><div class="r" style="left:1502px;top:116px;width:1px;height:29px;background:#e5e5e5;"></div><div class="r" style="left:1672px;top:116px;width:1px;height:29px;background:#e5e5e5;"></div><div class="r" style="left:1866px;top:116px;width:1px;height:29px;background:#e5e5e5;"></div><div class="r" style="left:526px;top:116px;width:1373px;height:622px;overflow:hidden;"><div class="t" style="left:5px;top:8px;font-size:15px;color:#000;">No.</div><div class="t" style="left:51px;top:8px;font-size:15px;color:#000;">Name</div><div class="t" style="left:322px;width:200px;text-align:right;top:7px;font-size:15px;">Size</div><div class="t" style="left:532px;top:8px;font-size:15px;color:#000;">Properties</div><div class="t" style="left:657px;top:8px;font-size:15px;color:#000;">EXIF Date</div><div class="t" style="left:868px;top:8px;font-size:15px;color:#000;">Info</div><div class="t" style="left:982px;top:8px;font-size:15px;color:#000;">Modified date</div><div class="t" style="left:1152px;top:8px;font-size:15px;color:#000;">Created date</div><div class="t" style="left:1346px;top:8px;font-size:15px;color:#000;">Print size</div><svg class="r" style="left:231px;top:0px" width="11" height="6" viewBox="0 0 11 6"><path d="M0.5 5.5L5.5 0.8L10.5 5.5" fill="none" stroke="#a0a0a0" stroke-width="1"/></svg><div class="t" style="left:4px;top:34px;font-size:15px;color:#000;">3</div><svg class="r" style="left:49px;top:33px" width="16" height="16" viewBox="0 0 16 16"><path d="M2 2H7L8 1H9V14H2Z" fill="#e8c462"/><path d="M3 3H11V15H3Z" fill="#ffe38a"/><path d="M2 2V15H3.5V3Z" fill="#d9a83a"/></svg><div class="t" style="left:71px;top:34px;font-size:15px;color:#000;letter-spacing:-0.617px;">Cosas de Lucía</div><div class="t" style="left:980px;top:34px;font-size:15px;color:#000;letter-spacing:-0.3px;">04/02/2016 15:43:33</div><div class="t" style="left:1151px;top:34px;font-size:15px;color:#000;letter-spacing:-0.3px;">04/02/2016 15:43:33</div><div class="t" style="left:4px;top:56px;font-size:15px;color:#000;">4</div><svg class="r" style="left:49px;top:55px" width="16" height="16" viewBox="0 0 16 16"><path d="M2 2H7L8 1H9V14H2Z" fill="#e8c462"/><path d="M3 3H11V15H3Z" fill="#ffe38a"/><path d="M2 2V15H3.5V3Z" fill="#d9a83a"/></svg><div class="t" style="left:71px;top:56px;font-size:15px;color:#000;">Fotos imprimir 2016</div><div class="t" style="left:980px;top:56px;font-size:15px;color:#000;letter-spacing:-0.3px;">27/01/2016 13:37:04</div><div class="t" style="left:1151px;top:56px;font-size:15px;color:#000;letter-spacing:-0.3px;">27/01/2016 13:37:04</div><div class="t" style="left:4px;top:78px;font-size:15px;color:#000;">5</div><svg class="r" style="left:49px;top:77px" width="16" height="16" viewBox="0 0 16 16"><path d="M2 2H7L8 1H9V14H2Z" fill="#e8c462"/><path d="M3 3H11V15H3Z" fill="#ffe38a"/><path d="M2 2V15H3.5V3Z" fill="#d9a83a"/></svg><div class="t" style="left:71px;top:78px;font-size:15px;color:#000;letter-spacing:-0.207px;">Serenity - No Power in the &#x27;Verse 006</div><div class="t" style="left:980px;top:78px;font-size:15px;color:#000;letter-spacing:-0.3px;">30/03/2017 21:05:31</div><div class="t" style="left:1151px;top:78px;font-size:15px;color:#000;letter-spacing:-0.3px;">30/03/2017 21:05:31</div><div class="t" style="left:4px;top:100px;font-size:15px;color:#000;">6</div><svg class="r" style="left:49px;top:99px" width="16" height="16" viewBox="0 0 16 16"><rect x="0.5" y="2.5" width="15" height="11" fill="#f4f4f4" stroke="#dadada"/><circle cx="6" cy="7" r="2" fill="#c0c0c0"/><circle cx="10" cy="9.5" r="1.6" fill="#c8c8c8"/></svg><div class="t" style="left:71px;top:100px;font-size:15px;color:#000;">abortar shutdown.bat</div><div class="t" style="left:425px;width:99px;text-align:right;top:99px;font-size:15px;letter-spacing:-0.5px;">15 Bytes</div><div class="t" style="left:980px;top:100px;font-size:15px;color:#000;letter-spacing:-0.3px;">27/08/2015 23:18:24</div><div class="t" style="left:1151px;top:100px;font-size:15px;color:#000;letter-spacing:-0.3px;">27/08/2015 23:18:24</div><div class="t" style="left:4px;top:122px;font-size:15px;color:#000;">7</div><svg class="r" style="left:49px;top:121px" width="16" height="16" viewBox="0 0 16 16"><rect x="0" y="0" width="16" height="16" fill="#0f2a40"/><rect x="1" y="1" width="14" height="14" fill="#1a3a58"/><path d="M5 4V10H8M10 6V10M10 7Q11 6 12.5 6" stroke="#b0d0f0" fill="none" stroke-width="1.2"/><rect x="0.5" y="9.5" width="7" height="7" fill="#fff" stroke="#9a9a9a" stroke-width="0.8"/><path d="M2 15.5V13Q2 11.5 3.5 11.5H5V10.5L7 12.5L5 14V13H3.5V15.5Z" fill="#3a5ab0"/></svg><div class="t" style="left:71px;top:122px;font-size:15px;color:#000;">Adobe Lightroom.lnk</div><div class="t" style="left:425px;width:99px;text-align:right;top:121px;font-size:15px;letter-spacing:-0.5px;">17.26 MiB</div><svg class="r" style="left:963px;top:123px" width="9" height="9" viewBox="0 0 9 9"><rect x="0" y="0" width="9" height="9" fill="#6a6a98"/><path d="M2.5 6.5L6 3M3.5 2.8H6.2V5.5" stroke="#fff" fill="none" stroke-width="1.2"/></svg><div class="t" style="left:980px;top:122px;font-size:15px;color:#000;letter-spacing:-0.3px;">01/03/2015 19:31:02</div><div class="t" style="left:1151px;top:122px;font-size:15px;color:#000;letter-spacing:-0.3px;">01/03/2015 19:31:02</div><div class="t" style="left:4px;top:144px;font-size:15px;color:#000;">8</div><svg class="r" style="left:49px;top:143px" width="16" height="16" viewBox="0 0 16 16"><circle cx="8" cy="8" r="7.5" fill="#7a5ac0"/><path d="M4 6Q8 3 12 6M5 8Q8 6 11 8" stroke="#fff" fill="none" stroke-width="1.2"/><rect x="0.5" y="9.5" width="7" height="7" fill="#fff" stroke="#9a9a9a" stroke-width="0.8"/><path d="M2 15.5V13Q2 11.5 3.5 11.5H5V10.5L7 12.5L5 14V13H3.5V15.5Z" fill="#3a5ab0"/></svg><div class="t" style="left:71px;top:144px;font-size:15px;color:#000;">BitTorrent.lnk</div><div class="t" style="left:425px;width:99px;text-align:right;top:143px;font-size:15px;letter-spacing:-0.5px;">1.89 MiB</div><svg class="r" style="left:963px;top:145px" width="9" height="9" viewBox="0 0 9 9"><rect x="0" y="0" width="9" height="9" fill="#6a6a98"/><path d="M2.5 6.5L6 3M3.5 2.8H6.2V5.5" stroke="#fff" fill="none" stroke-width="1.2"/></svg><div class="t" style="left:980px;top:144px;font-size:15px;color:#000;letter-spacing:-0.3px;">28/03/2015 17:59:38</div><div class="t" style="left:1151px;top:144px;font-size:15px;color:#000;letter-spacing:-0.3px;">28/03/2015 17:59:38</div><div class="t" style="left:4px;top:166px;font-size:15px;color:#000;">9</div><svg class="r" style="left:49px;top:165px" width="16" height="16" viewBox="0 0 16 16"><rect x="1" y="1" width="3" height="14" fill="#8a5030"/><rect x="4.5" y="2" width="3" height="13" fill="#708090"/><rect x="8" y="1" width="2.5" height="14" fill="#d0b060"/><path d="M11 6L14 5L15.5 15H12.5Z" fill="#4a8ad8"/><rect x="0.5" y="9.5" width="7" height="7" fill="#fff" stroke="#9a9a9a" stroke-width="0.8"/><path d="M2 15.5V13Q2 11.5 3.5 11.5H5V10.5L7 12.5L5 14V13H3.5V15.5Z" fill="#3a5ab0"/></svg><div class="t" style="left:71px;top:166px;font-size:15px;color:#000;">calibre 64bit - From source.lnk</div><div class="t" style="left:425px;width:99px;text-align:right;top:165px;font-size:15px;letter-spacing:-0.5px;">227.50 KiB</div><svg class="r" style="left:963px;top:167px" width="9" height="9" viewBox="0 0 9 9"><rect x="0" y="0" width="9" height="9" fill="#6a6a98"/><path d="M2.5 6.5L6 3M3.5 2.8H6.2V5.5" stroke="#fff" fill="none" stroke-width="1.2"/></svg><div class="t" style="left:980px;top:166px;font-size:15px;color:#000;letter-spacing:-0.3px;">16/07/2016 13:42:36</div><div class="t" style="left:1151px;top:166px;font-size:15px;color:#000;letter-spacing:-0.3px;">16/07/2016 13:42:36</div><div class="t" style="left:4px;top:188px;font-size:15px;color:#000;">10</div><svg class="r" style="left:49px;top:187px" width="16" height="16" viewBox="0 0 16 16"><path d="M2.5 0.5H10L13.5 4V15.5H2.5Z" fill="#fafafa" stroke="#dadada"/></svg><div class="t" style="left:71px;top:188px;font-size:15px;color:#000;">Clave.txt</div><div class="t" style="left:425px;width:99px;text-align:right;top:187px;font-size:15px;letter-spacing:-0.5px;">1.11 KiB</div><div class="t" style="left:980px;top:188px;font-size:15px;color:#000;letter-spacing:-0.3px;">27/03/2015 18:01:27</div><div class="t" style="left:1151px;top:188px;font-size:15px;color:#000;letter-spacing:-0.3px;">27/03/2015 18:01:27</div><div class="t" style="left:4px;top:210px;font-size:15px;color:#000;">11</div><svg class="r" style="left:49px;top:209px" width="16" height="16" viewBox="0 0 16 16"><path d="M2.5 0.5H10L13.5 4V15.5H2.5Z" fill="#fafafa" stroke="#dadada"/><circle cx="5.5" cy="11.5" r="2.8" fill="#b8b8b8"/></svg><div class="t" style="left:71px;top:210px;font-size:15px;color:#000;">desktop.ini</div><div class="t" style="left:425px;width:99px;text-align:right;top:209px;font-size:15px;letter-spacing:-0.5px;">576 Bytes</div><div class="t" style="left:980px;top:210px;font-size:15px;color:#000;letter-spacing:-0.3px;">14/03/2015 21:39:15</div><div class="t" style="left:1151px;top:210px;font-size:15px;color:#000;letter-spacing:-0.3px;">14/03/2015 21:39:15</div><div class="t" style="left:4px;top:232px;font-size:15px;color:#000;">12</div><svg class="r" style="left:49px;top:231px" width="16" height="16" viewBox="0 0 16 16"><rect x="5" y="1" width="11" height="14" fill="#fff" stroke="#1e7145"/><path d="M7 4h7M7 7h7M7 10h7M10 2V14" stroke="#1e7145" stroke-width="0.8"/><rect x="0" y="0" width="9" height="16" fill="#1e7145"/><path d="M2 4L7 12M7 4L2 12" stroke="#fff" stroke-width="1.5"/><rect x="0.5" y="9.5" width="7" height="7" fill="#fff" stroke="#9a9a9a" stroke-width="0.8"/><path d="M2 15.5V13Q2 11.5 3.5 11.5H5V10.5L7 12.5L5 14V13H3.5V15.5Z" fill="#3a5ab0"/></svg><div class="t" style="left:71px;top:232px;font-size:15px;color:#000;">Excel 2016.lnk</div><div class="t" style="left:425px;width:99px;text-align:right;top:231px;font-size:15px;letter-spacing:-0.5px;">3.52 MiB</div><svg class="r" style="left:963px;top:233px" width="9" height="9" viewBox="0 0 9 9"><rect x="0" y="0" width="9" height="9" fill="#6a6a98"/><path d="M2.5 6.5L6 3M3.5 2.8H6.2V5.5" stroke="#fff" fill="none" stroke-width="1.2"/></svg><div class="t" style="left:980px;top:232px;font-size:15px;color:#000;letter-spacing:-0.3px;">15/03/2017 21:32:31</div><div class="t" style="left:1151px;top:232px;font-size:15px;color:#000;letter-spacing:-0.3px;">15/03/2017 21:32:31</div><div class="t" style="left:4px;top:254px;font-size:15px;color:#000;">13</div><svg class="r" style="left:49px;top:253px" width="16" height="16" viewBox="0 0 16 16"><path d="M2.5 0.5H10.5L13.5 3.5V15.5H2.5Z" fill="#fff" stroke="#d8d8d8"/><rect x="2" y="1" width="8" height="3.5" fill="#e03030"/><path d="M5 13Q8 6 8 9Q8 12 12 13" fill="none" stroke="#e03030" stroke-width="0.9"/></svg><div class="t" style="left:71px;top:254px;font-size:15px;color:#000;letter-spacing:-0.403px;">Folleto_Senda_50_Lapuente_2012.pdf</div><div class="t" style="left:425px;width:99px;text-align:right;top:253px;font-size:15px;letter-spacing:-0.5px;">683.07 KiB</div><div class="t" style="left:980px;top:254px;font-size:15px;color:#000;letter-spacing:-0.3px;">10/02/2017 18:51:13</div><div class="t" style="left:1151px;top:254px;font-size:15px;color:#000;letter-spacing:-0.3px;">10/02/2017 18:51:13</div><div class="t" style="left:4px;top:276px;font-size:15px;color:#000;">14</div><svg class="r" style="left:49px;top:275px" width="16" height="16" viewBox="0 0 16 16"><path d="M3.5 0.5H10.5L13.5 3.5V15.5H3.5Z" fill="#fff" stroke="#8a8a8a"/><rect x="0.5" y="9.5" width="7" height="7" fill="#fff" stroke="#9a9a9a" stroke-width="0.8"/><path d="M2 15.5V13Q2 11.5 3.5 11.5H5V10.5L7 12.5L5 14V13H3.5V15.5Z" fill="#3a5ab0"/></svg><div class="t" style="left:71px;top:276px;font-size:15px;color:#000;letter-spacing:-0.08px;">hosts - Acceso directo.lnk</div><div class="t" style="left:425px;width:99px;text-align:right;top:275px;font-size:15px;letter-spacing:-0.5px;">2.01 KiB</div><svg class="r" style="left:963px;top:277px" width="9" height="9" viewBox="0 0 9 9"><rect x="0" y="0" width="9" height="9" fill="#6a6a98"/><path d="M2.5 6.5L6 3M3.5 2.8H6.2V5.5" stroke="#fff" fill="none" stroke-width="1.2"/></svg><div class="t" style="left:980px;top:276px;font-size:15px;color:#000;letter-spacing:-0.3px;">25/03/2013 15:25:43</div><div class="t" style="left:1151px;top:276px;font-size:15px;color:#000;letter-spacing:-0.3px;">25/03/2013 15:25:43</div><div class="t" style="left:4px;top:298px;font-size:15px;color:#000;">15</div><svg class="r" style="left:49px;top:297px" width="16" height="16" viewBox="0 0 16 16"><path d="M1 4H15L12 9H4Z" fill="#30a070"/><path d="M6 1L10 1L9 14H7Z" fill="#40a0e0"/><rect x="0.5" y="9.5" width="7" height="7" fill="#fff" stroke="#9a9a9a" stroke-width="0.8"/><path d="M2 15.5V13Q2 11.5 3.5 11.5H5V10.5L7 12.5L5 14V13H3.5V15.5Z" fill="#3a5ab0"/></svg><div class="t" style="left:71px;top:298px;font-size:15px;color:#000;">Hugin.lnk</div><div class="t" style="left:425px;width:99px;text-align:right;top:297px;font-size:15px;letter-spacing:-0.5px;">3.20 MiB</div><svg class="r" style="left:963px;top:299px" width="9" height="9" viewBox="0 0 9 9"><rect x="0" y="0" width="9" height="9" fill="#6a6a98"/><path d="M2.5 6.5L6 3M3.5 2.8H6.2V5.5" stroke="#fff" fill="none" stroke-width="1.2"/></svg><div class="t" style="left:980px;top:298px;font-size:15px;color:#000;letter-spacing:-0.3px;">03/09/2016 12:17:14</div><div class="t" style="left:1151px;top:298px;font-size:15px;color:#000;letter-spacing:-0.3px;">03/09/2016 12:17:14</div><div class="t" style="left:4px;top:320px;font-size:15px;color:#000;">16</div><svg class="r" style="left:49px;top:319px" width="16" height="16" viewBox="0 0 16 16"><circle cx="8" cy="8" r="7.5" fill="#db4437"/><path d="M8 8L1.5 11.75A7.5 7.5 0 0 0 8 15.5Z" fill="#0f9d58"/><path d="M8 8L8 15.5A7.5 7.5 0 0 0 14.5 11.75L15.5 8Z" fill="#ffcd40"/><path d="M8 8L1.5 11.75A7.5 7.5 0 0 1 1.5 4.25Z" fill="#0f9d58"/><circle cx="8" cy="8" r="3.6" fill="#fff"/><circle cx="8" cy="8" r="2.7" fill="#4285f4"/></svg><div class="t" style="left:71px;top:320px;font-size:15px;color:#000;letter-spacing:-0.423px;">Measurement Report 3.1.7.2 — PA241W @ 0, 0, 192…</div><div class="t" style="left:425px;width:99px;text-align:right;top:319px;font-size:15px;letter-spacing:-0.5px;">250.91 KiB</div><div class="t" style="left:980px;top:320px;font-size:15px;color:#000;letter-spacing:-0.3px;">14/11/2016 20:14:22</div><div class="t" style="left:1151px;top:320px;font-size:15px;color:#000;letter-spacing:-0.3px;">14/11/2016 20:14:22</div><div class="t" style="left:4px;top:342px;font-size:15px;color:#000;">17</div><svg class="r" style="left:49px;top:341px" width="16" height="16" viewBox="0 0 16 16"><circle cx="8" cy="8" r="7.5" fill="#db4437"/><path d="M8 8L1.5 11.75A7.5 7.5 0 0 0 8 15.5Z" fill="#0f9d58"/><path d="M8 8L8 15.5A7.5 7.5 0 0 0 14.5 11.75L15.5 8Z" fill="#ffcd40"/><path d="M8 8L1.5 11.75A7.5 7.5 0 0 1 1.5 4.25Z" fill="#0f9d58"/><circle cx="8" cy="8" r="3.6" fill="#fff"/><circle cx="8" cy="8" r="2.7" fill="#4285f4"/></svg><div class="t" style="left:71px;top:342px;font-size:15px;color:#000;letter-spacing:-0.423px;">Measurement Report 3.1.7.2 — PA241W @ 0, 0, 192…</div><div class="t" style="left:425px;width:99px;text-align:right;top:341px;font-size:15px;letter-spacing:-0.5px;">250.88 KiB</div><div class="t" style="left:980px;top:342px;font-size:15px;color:#000;letter-spacing:-0.3px;">14/11/2016 21:22:28</div><div class="t" style="left:1151px;top:342px;font-size:15px;color:#000;letter-spacing:-0.3px;">14/11/2016 21:22:28</div><div class="t" style="left:4px;top:364px;font-size:15px;color:#000;">18</div><svg class="r" style="left:49px;top:363px" width="16" height="16" viewBox="0 0 16 16"><circle cx="8" cy="8" r="7.5" fill="#db4437"/><path d="M8 8L1.5 11.75A7.5 7.5 0 0 0 8 15.5Z" fill="#0f9d58"/><path d="M8 8L8 15.5A7.5 7.5 0 0 0 14.5 11.75L15.5 8Z" fill="#ffcd40"/><path d="M8 8L1.5 11.75A7.5 7.5 0 0 1 1.5 4.25Z" fill="#0f9d58"/><circle cx="8" cy="8" r="3.6" fill="#fff"/><circle cx="8" cy="8" r="2.7" fill="#4285f4"/></svg><div class="t" style="left:71px;top:364px;font-size:15px;color:#000;letter-spacing:-0.393px;">Measurement Report 3.2 — PA241W @ 0, 0, 1920x1…</div><div class="t" style="left:425px;width:99px;text-align:right;top:363px;font-size:15px;letter-spacing:-0.5px;">250.87 KiB</div><div class="t" style="left:980px;top:364px;font-size:15px;color:#000;letter-spacing:-0.3px;">20/11/2016 18:21:48</div><div class="t" style="left:1151px;top:364px;font-size:15px;color:#000;letter-spacing:-0.3px;">20/11/2016 18:21:48</div><div class="t" style="left:4px;top:386px;font-size:15px;color:#000;">19</div><svg class="r" style="left:49px;top:385px" width="16" height="16" viewBox="0 0 16 16"><circle cx="8" cy="8" r="7.5" fill="#db4437"/><path d="M8 8L1.5 11.75A7.5 7.5 0 0 0 8 15.5Z" fill="#0f9d58"/><path d="M8 8L8 15.5A7.5 7.5 0 0 0 14.5 11.75L15.5 8Z" fill="#ffcd40"/><path d="M8 8L1.5 11.75A7.5 7.5 0 0 1 1.5 4.25Z" fill="#0f9d58"/><circle cx="8" cy="8" r="3.6" fill="#fff"/><circle cx="8" cy="8" r="2.7" fill="#4285f4"/></svg><div class="t" style="left:71px;top:386px;font-size:15px;color:#000;letter-spacing:-0.407px;">Measurement Report 3.2.3 — PA241W @ 0, 0, 1920…</div><div class="t" style="left:425px;width:99px;text-align:right;top:385px;font-size:15px;letter-spacing:-0.5px;">250.88 KiB</div><div class="t" style="left:980px;top:386px;font-size:15px;color:#000;letter-spacing:-0.3px;">29/01/2017 22:15:01</div><div class="t" style="left:1151px;top:386px;font-size:15px;color:#000;letter-spacing:-0.3px;">29/01/2017 22:15:01</div><div class="t" style="left:4px;top:408px;font-size:15px;color:#000;">20</div><svg class="r" style="left:49px;top:407px" width="16" height="16" viewBox="0 0 16 16"><circle cx="8" cy="8" r="7.5" fill="#db4437"/><path d="M8 8L1.5 11.75A7.5 7.5 0 0 0 8 15.5Z" fill="#0f9d58"/><path d="M8 8L8 15.5A7.5 7.5 0 0 0 14.5 11.75L15.5 8Z" fill="#ffcd40"/><path d="M8 8L1.5 11.75A7.5 7.5 0 0 1 1.5 4.25Z" fill="#0f9d58"/><circle cx="8" cy="8" r="3.6" fill="#fff"/><circle cx="8" cy="8" r="2.7" fill="#4285f4"/></svg><div class="t" style="left:71px;top:408px;font-size:15px;color:#000;letter-spacing:-0.407px;">Measurement Report 3.2.4 — PA241W @ 0, 0, 1920…</div><div class="t" style="left:425px;width:99px;text-align:right;top:407px;font-size:15px;letter-spacing:-0.5px;">250.88 KiB</div><div class="t" style="left:980px;top:408px;font-size:15px;color:#000;letter-spacing:-0.3px;">25/03/2017 15:01:59</div><div class="t" style="left:1151px;top:408px;font-size:15px;color:#000;letter-spacing:-0.3px;">25/03/2017 15:01:59</div><div class="t" style="left:4px;top:430px;font-size:15px;color:#000;">21</div><svg class="r" style="left:49px;top:429px" width="16" height="16" viewBox="0 0 16 16"><rect x="1" y="3" width="14" height="11" fill="#404040"/><rect x="3" y="5" width="10" height="7" fill="#90b8e0"/><path d="M1 1L15 3" stroke="#606060" stroke-width="2"/><rect x="0.5" y="9.5" width="7" height="7" fill="#fff" stroke="#9a9a9a" stroke-width="0.8"/><path d="M2 15.5V13Q2 11.5 3.5 11.5H5V10.5L7 12.5L5 14V13H3.5V15.5Z" fill="#3a5ab0"/></svg><div class="t" style="left:71px;top:430px;font-size:15px;color:#000;letter-spacing:-0.456px;">MPC-HC x64.lnk</div><div class="t" style="left:425px;width:99px;text-align:right;top:429px;font-size:15px;letter-spacing:-0.5px;">12.38 MiB</div><svg class="r" style="left:963px;top:431px" width="9" height="9" viewBox="0 0 9 9"><rect x="0" y="0" width="9" height="9" fill="#6a6a98"/><path d="M2.5 6.5L6 3M3.5 2.8H6.2V5.5" stroke="#fff" fill="none" stroke-width="1.2"/></svg><div class="t" style="left:980px;top:430px;font-size:15px;color:#000;letter-spacing:-0.3px;">06/03/2015 22:27:57</div><div class="t" style="left:1151px;top:430px;font-size:15px;color:#000;letter-spacing:-0.3px;">06/03/2015 22:27:57</div><div class="t" style="left:4px;top:452px;font-size:15px;color:#000;">22</div><svg class="r" style="left:49px;top:451px" width="16" height="16" viewBox="0 0 16 16"><path d="M2.5 0.5H10.5L13.5 3.5V15.5H2.5Z" fill="#fff" stroke="#d8d8d8"/><rect x="2" y="1" width="8" height="3.5" fill="#e03030"/><path d="M5 13Q8 6 8 9Q8 12 12 13" fill="none" stroke="#e03030" stroke-width="0.9"/></svg><div class="t" style="left:71px;top:452px;font-size:15px;color:#000;">Panel.pdf</div><div class="t" style="left:425px;width:99px;text-align:right;top:451px;font-size:15px;letter-spacing:-0.5px;">1.36 MiB</div><div class="t" style="left:980px;top:452px;font-size:15px;color:#000;letter-spacing:-0.3px;">23/03/2017 16:49:08</div><div class="t" style="left:1151px;top:452px;font-size:15px;color:#000;letter-spacing:-0.3px;">23/03/2017 16:49:08</div><div class="t" style="left:4px;top:474px;font-size:15px;color:#000;">23</div><svg class="r" style="left:49px;top:473px" width="16" height="16" viewBox="0 0 16 16"><path d="M2.5 0.5H10.5L13.5 3.5V15.5H2.5Z" fill="#fff" stroke="#d8d8d8"/><rect x="1" y="5" width="8" height="8" fill="#d04020"/><path d="M4 11V7H6Q7.5 7 7.5 8.3Q7.5 9.5 6 9.5H4" fill="none" stroke="#fff" stroke-width="1.1"/></svg><div class="t" style="left:71px;top:474px;font-size:15px;color:#000;">Panel.pptx</div><div class="t" style="left:425px;width:99px;text-align:right;top:473px;font-size:15px;letter-spacing:-0.5px;">4.58 MiB</div><div class="t" style="left:980px;top:474px;font-size:15px;color:#000;letter-spacing:-0.3px;">23/03/2017 19:07:40</div><div class="t" style="left:1151px;top:474px;font-size:15px;color:#000;letter-spacing:-0.3px;">23/03/2017 19:07:40</div><div class="r" style="left:0px;top:492px;width:1373px;height:22px;background:#ebeacd;"></div><div class="t" style="left:4px;top:496px;font-size:15px;color:#000;">24</div><svg class="r" style="left:49px;top:495px" width="16" height="16" viewBox="0 0 16 16"><path d="M2 0.5H10.5L14 4V15.5H2Z" fill="#c04a10"/><circle cx="8" cy="7" r="3.2" fill="#f8e0c8"/><circle cx="8" cy="7" r="1.6" fill="#c04a10"/><rect x="4.5" y="11.5" width="7" height="2" fill="#f0a070"/></svg><div class="t" style="left:71px;top:496px;font-size:15px;color:#000;letter-spacing:-0.407px;">Pintacaras mariquita.JPG</div><div class="t" style="left:425px;width:99px;text-align:right;top:495px;font-size:15px;letter-spacing:-0.5px;">841.23 KiB</div><div class="t" style="left:530px;top:496px;font-size:15px;color:#000;letter-spacing:-0.38px;">1536x2048,16M</div><div class="t" style="left:655px;top:496px;font-size:15px;color:#000;letter-spacing:-0.3px;">16/10/2007 13:17:34</div><svg class="r" style="left:957px;top:497px" width="15" height="9" viewBox="0 0 15 9"><rect x="0" y="0" width="15" height="9" fill="#7070a0"/><text x="7.5" y="7.3" font-size="6.5" font-weight="bold" font-family="Liberation Sans" text-anchor="middle" fill="#fff">EXIF</text></svg><svg class="r" style="left:937px;top:497px" width="15" height="9" viewBox="0 0 15 9"><rect x="0" y="0" width="15" height="9" fill="#7070a0"/><text x="7.5" y="7.3" font-size="6.5" font-weight="bold" font-family="Liberation Sans" text-anchor="middle" fill="#fff">ICC</text></svg><div class="t" style="left:980px;top:496px;font-size:15px;color:#000;letter-spacing:-0.3px;">15/02/2017 20:14:33</div><div class="t" style="left:1151px;top:496px;font-size:15px;color:#000;letter-spacing:-0.3px;">15/02/2017 20:14:33</div><div class="t" style="left:1344px;top:496px;font-size:15px;color:#000;">21.3</div><div class="t" style="left:4px;top:518px;font-size:15px;color:#000;">25</div><svg class="r" style="left:49px;top:517px" width="16" height="16" viewBox="0 0 16 16"><rect x="5" y="1" width="11" height="14" fill="#fff" stroke="#d04020"/><path d="M10 3V7H14" stroke="#d04020"/><rect x="0" y="0" width="9" height="16" fill="#d04020"/><path d="M3 12V4H5.5Q7.5 4 7.5 6Q7.5 8 5.5 8H3" fill="none" stroke="#fff" stroke-width="1.4"/><rect x="0.5" y="9.5" width="7" height="7" fill="#fff" stroke="#9a9a9a" stroke-width="0.8"/><path d="M2 15.5V13Q2 11.5 3.5 11.5H5V10.5L7 12.5L5 14V13H3.5V15.5Z" fill="#3a5ab0"/></svg><div class="t" style="left:71px;top:518px;font-size:15px;color:#000;letter-spacing:-0.347px;">PowerPoint 2016.lnk</div><div class="t" style="left:425px;width:99px;text-align:right;top:517px;font-size:15px;letter-spacing:-0.5px;">3.35 MiB</div><svg class="r" style="left:963px;top:519px" width="9" height="9" viewBox="0 0 9 9"><rect x="0" y="0" width="9" height="9" fill="#6a6a98"/><path d="M2.5 6.5L6 3M3.5 2.8H6.2V5.5" stroke="#fff" fill="none" stroke-width="1.2"/></svg><div class="t" style="left:980px;top:518px;font-size:15px;color:#000;letter-spacing:-0.3px;">15/03/2017 21:32:31</div><div class="t" style="left:1151px;top:518px;font-size:15px;color:#000;letter-spacing:-0.3px;">15/03/2017 21:32:31</div><div class="t" style="left:4px;top:540px;font-size:15px;color:#000;">26</div><svg class="r" style="left:49px;top:539px" width="16" height="16" viewBox="0 0 16 16"><rect x="6" y="0.5" width="9" height="7" fill="#d0e0f0" stroke="#303060"/><rect x="1" y="8.5" width="9" height="7" fill="#d0e0f0" stroke="#303060"/><path d="M12 8L4 12" stroke="#e0c000" stroke-width="2"/></svg><div class="t" style="left:71px;top:540px;font-size:15px;color:#000;">putty.exe</div><div class="t" style="left:425px;width:99px;text-align:right;top:539px;font-size:15px;letter-spacing:-0.5px;">518.91 KiB</div><div class="t" style="left:980px;top:540px;font-size:15px;color:#000;letter-spacing:-0.3px;">20/06/2016 16:01:53</div><div class="t" style="left:1151px;top:540px;font-size:15px;color:#000;letter-spacing:-0.3px;">20/06/2016 16:01:49</div><div class="r" style="left:0px;top:558px;width:1373px;height:22px;background:#bed9d6;"></div><div class="r" style="left:47px;top:559px;width:378px;height:20px;background:transparent;border:1px dotted #303030;box-sizing:border-box;"></div><div class="t" style="left:4px;top:562px;font-size:15px;color:#000;">27</div><svg class="r" style="left:49px;top:561px" width="16" height="16" viewBox="0 0 16 16"><path d="M2 0.5H10.5L14 4V15.5H2Z" fill="#c04a10"/><circle cx="8" cy="7" r="3.2" fill="#f8e0c8"/><circle cx="8" cy="7" r="1.6" fill="#c04a10"/><rect x="4.5" y="11.5" width="7" height="2" fill="#f0a070"/></svg><div class="t" style="left:71px;top:562px;font-size:15px;color:#000;">pintacaras mariposa.jpg</div><div class="t" style="left:425px;width:99px;text-align:right;top:561px;font-size:15px;letter-spacing:-0.5px;">17.78 KiB</div><div class="t" style="left:530px;top:562px;font-size:15px;color:#000;letter-spacing:-0.38px;">236x361,16M</div><div class="t" style="left:980px;top:562px;font-size:15px;color:#000;letter-spacing:-0.3px;">15/02/2017 19:45:51</div><div class="t" style="left:1151px;top:562px;font-size:15px;color:#000;letter-spacing:-0.3px;">15/02/2017 19:45:37</div><div class="t" style="left:1344px;top:562px;font-size:15px;color:#000;">3.28</div><div class="t" style="left:4px;top:584px;font-size:15px;color:#000;">28</div><svg class="r" style="left:49px;top:583px" width="16" height="16" viewBox="0 0 16 16"><path d="M2.5 0.5H10.5L13.5 3.5V15.5H2.5Z" fill="#fff" stroke="#d8d8d8"/><rect x="2" y="1" width="8" height="3.5" fill="#e03030"/><path d="M5 13Q8 6 8 9Q8 12 12 13" fill="none" stroke="#e03030" stroke-width="0.9"/></svg><div class="t" style="left:71px;top:584px;font-size:15px;color:#000;">Renta Ana.pdf</div><div class="t" style="left:425px;width:99px;text-align:right;top:583px;font-size:15px;letter-spacing:-0.5px;">183.92 KiB</div><div class="t" style="left:980px;top:584px;font-size:15px;color:#000;letter-spacing:-0.3px;">24/05/2016 20:00:21</div><div class="t" style="left:1151px;top:584px;font-size:15px;color:#000;letter-spacing:-0.3px;">24/05/2016 20:00:21</div><div class="r" style="left:0px;top:602px;width:1373px;height:22px;background:#ebeacd;"></div><div class="t" style="left:4px;top:606px;font-size:15px;color:#000;">29</div><svg class="r" style="left:49px;top:605px" width="16" height="16" viewBox="0 0 16 16"><path d="M2 0.5H10.5L14 4V15.5H2Z" fill="#c04a10"/><circle cx="8" cy="7" r="3.2" fill="#f8e0c8"/><circle cx="8" cy="7" r="1.6" fill="#c04a10"/><rect x="4.5" y="11.5" width="7" height="2" fill="#f0a070"/></svg><div class="t" style="left:71px;top:606px;font-size:15px;color:#000;">rioperales01.jpg</div><div class="t" style="left:425px;width:99px;text-align:right;top:605px;font-size:15px;letter-spacing:-0.5px;">589.37 KiB</div><div class="t" style="left:530px;top:606px;font-size:15px;color:#000;letter-spacing:-0.38px;">1280x960,16M</div><svg class="r" style="left:957px;top:607px" width="15" height="9" viewBox="0 0 15 9"><rect x="0" y="0" width="15" height="9" fill="#7070a0"/><text x="7.5" y="7.3" font-size="6.5" font-weight="bold" font-family="Liberation Sans" text-anchor="middle" fill="#fff">EXIF</text></svg><div class="t" style="left:980px;top:606px;font-size:15px;color:#000;letter-spacing:-0.3px;">11/03/2016 18:36:45</div><div class="t" style="left:1151px;top:606px;font-size:15px;color:#000;letter-spacing:-0.3px;">11/03/2016 18:36:45</div><div class="t" style="left:1344px;top:606px;font-size:15px;color:#000;">17.7</div></div><div class="r" style="left:1899px;top:116px;width:19px;height:622px;background:#f0f0f0;"></div><svg class="r" style="left:1903px;top:123px" width="10" height="7" viewBox="0 0 10 7"><path d="M0.8 6L5 1.5L9.2 6" fill="none" stroke="#606060" stroke-width="1.6"/></svg><div class="r" style="left:1900px;top:187px;width:18px;height:429px;background:#cdcdcd;"></div><svg class="r" style="left:1903px;top:723px" width="10" height="7" viewBox="0 0 10 7"><path d="M0.8 1L5 5.5L9.2 1" fill="none" stroke="#606060" stroke-width="1.6"/></svg><div class="r" style="left:526px;top:738px;width:1373px;height:20px;background:#f0f0f0;"></div><div class="r" style="left:1899px;top:738px;width:20px;height:20px;background:#f0f0f0;"></div><div class="r" style="left:547px;top:738px;width:312px;height:19px;background:#cdcdcd;"></div><svg class="r" style="left:532px;top:743px" width="7" height="10" viewBox="0 0 7 10"><path d="M6 0.8L1.5 5L6 9.2" fill="none" stroke="#606060" stroke-width="1.6"/></svg><svg class="r" style="left:1884px;top:743px" width="7" height="10" viewBox="0 0 7 10"><path d="M1 0.8L5.5 5L1 9.2" fill="none" stroke="#606060" stroke-width="1.6"/></svg><div class="r" style="left:1547px;top:115px;width:196px;height:552px;background:#f0f0f0;border:1px solid #cccccc;box-sizing:border-box;box-shadow:2px 2px 3px rgba(0,0,0,0.35);"></div><div class="t" style="left:1584px;top:123px;font-size:15px;color:#000;">Name</div><div class="t" style="left:1584px;top:147px;font-size:15px;color:#000;">Name (not numeric)</div><div class="t" style="left:1584px;top:171px;font-size:15px;color:#000;">Extension</div><div class="t" style="left:1584px;top:195px;font-size:15px;color:#000;">Date</div><div class="t" style="left:1584px;top:219px;font-size:15px;color:#000;">Created Date</div><div class="t" style="left:1584px;top:243px;font-size:15px;color:#000;">EXIF Date</div><div class="t" style="left:1584px;top:267px;font-size:15px;color:#000;">Type</div><div class="t" style="left:1584px;top:291px;font-size:15px;color:#000;">File size</div><div class="t" style="left:1584px;top:315px;font-size:15px;color:#000;">Image size</div><div class="t" style="left:1584px;top:339px;font-size:15px;color:#000;">Image Width</div><div class="t" style="left:1584px;top:363px;font-size:15px;color:#000;">Image Height</div><div class="t" style="left:1584px;top:387px;font-size:15px;color:#000;">Orientation</div><div class="t" style="left:1584px;top:411px;font-size:15px;color:#000;">Ratio</div><div class="t" style="left:1584px;top:435px;font-size:15px;color:#000;">Print size</div><div class="t" style="left:1584px;top:459px;font-size:15px;color:#000;">Comment</div><div class="t" style="left:1584px;top:483px;font-size:15px;color:#000;">Folder</div><div class="t" style="left:1584px;top:507px;font-size:15px;color:#000;">Rating</div><div class="t" style="left:1584px;top:531px;font-size:15px;color:#000;">Colour label</div><div class="t" style="left:1584px;top:555px;font-size:15px;color:#000;">Custom</div><div class="r" style="left:1550px;top:550px;width:24px;height:24px;background:#90c8f6;"></div><svg class="r" style="left:1557px;top:557px" width="10" height="10" viewBox="0 0 10 10"><circle cx="5" cy="5" r="4.3" fill="#202020"/></svg><div class="r" style="left:1580px;top:578px;width:158px;height:1px;background:#d7d7d7;"></div><div class="r" style="left:1550px;top:583px;width:24px;height:24px;background:#90c8f6;"></div><svg class="r" style="left:1557px;top:590px" width="10" height="10" viewBox="0 0 10 10"><circle cx="5" cy="5" r="4.3" fill="#202020"/></svg><div class="t" style="left:1584px;top:588px;font-size:15px;color:#000;">Ascending</div><div class="t" style="left:1584px;top:612px;font-size:15px;color:#000;">Descending</div><div class="r" style="left:1580px;top:636px;width:158px;height:1px;background:#d7d7d7;"></div><div class="t" style="left:1584px;top:645px;font-size:15px;color:#000;">Show header</div><div class="r" style="left:0px;top:765px;width:519px;height:23px;background:#dadada;border:1px solid #c4c4c4;box-sizing:border-box;"></div><div class="t" style="left:5px;top:770px;font-size:14px;color:#000;">Preview</div><svg class="r" style="left:488px;top:771px" width="10" height="10" viewBox="0 0 10 10"><rect x="0.5" y="3.5" width="6" height="6" fill="none" stroke="#000" stroke-width="1.2"/><path d="M3 3.5V0.8H9.2V6.8H6.5" fill="none" stroke="#000" stroke-width="1.2"/><rect x="0.5" y="3.5" width="6" height="1.5" fill="#000"/><rect x="3" y="0.6" width="6" height="1.5" fill="#000"/></svg><svg class="r" style="left:505px;top:772px" width="10" height="10" viewBox="0 0 10 10"><path d="M1.5 1.5L8.5 8.5M8.5 1.5L1.5 8.5" stroke="#000" stroke-width="1.7"/></svg><svg class="r" style="left:158px;top:790px" width="202" height="309" viewBox="0 0 202 309">
<defs>
<filter id="bl" x="-10%" y="-10%" width="120%" height="120%"><feGaussianBlur stdDeviation="2"/></filter>
<filter id="bl2"><feGaussianBlur stdDeviation="0.8"/></filter>
<radialGradient id="vig" cx="0.5" cy="0.5" r="0.75"><stop offset="0.82" stop-color="#fff" stop-opacity="0"/><stop offset="1" stop-color="#fff" stop-opacity="0.9"/></radialGradient>
<linearGradient id="hairg" x1="0" y1="0" x2="1" y2="0.6"><stop offset="0" stop-color="#6a4e3c"/><stop offset="0.45" stop-color="#a8845e"/><stop offset="1" stop-color="#c8ae90"/></linearGradient>
<radialGradient id="skin" cx="0.45" cy="0.45" r="0.6"><stop offset="0" stop-color="#f6e4d0"/><stop offset="0.8" stop-color="#f0d8c0"/><stop offset="1" stop-color="#e2c4a8"/></radialGradient>
</defs>
<rect width="202" height="309" fill="#b49478"/>
<g filter="url(#bl)">
<rect x="-10" y="-10" width="222" height="280" fill="url(#hairg)"/>
<path d="M120 20Q170 40 180 110Q185 170 202 200V60Z" fill="#c8ae94" opacity="0.7"/>
<path d="M-5 0H14V70H-5Z" fill="#e6e6e0"/>
<path d="M0 15Q8 10 12 22V55H0Z" fill="#a8c060"/>
<path d="M-5 60H9Q6 150 14 200L-5 210Z" fill="#ddd2d0"/>
<path d="M13 88Q22 42 70 37Q122 33 148 72Q166 112 166 160Q168 205 140 238Q110 257 78 254Q38 247 22 212Q9 172 10 125Q11 102 13 88Z" fill="url(#skin)"/>
<path d="M170 150Q192 147 198 168Q196 192 176 196Z" fill="#f0d4bc"/>
<path d="M20 218Q42 254 80 257Q125 256 150 230L156 290H12Z" fill="#eacfb6"/>
<path d="M43 247Q82 262 132 243" fill="none" stroke="#b08870" stroke-width="4"/>
<path d="M-5 200Q18 228 24 309H-5Z" fill="#dccbe6"/>
<path d="M140 309Q150 258 202 228V309Z" fill="#e4d2f0"/>
<path d="M10 282Q80 272 152 285V309H10Z" fill="#f2e8f6"/>
</g>
<g filter="url(#bl2)">
<path d="M21 54Q35 80 50 100Q57 115 58 130Q45 120 30 117Q16 118 9 128Q8 90 21 54Z" fill="#e0d8f0"/>
<path d="M20 62Q34 84 47 108" fill="none" stroke="#b8ece8" stroke-width="5"/>
<path d="M21 54Q36 82 52 104Q57 116 57 126" fill="none" stroke="#7050a8" stroke-width="2"/>
<path d="M15 84Q14 100 19 116" fill="none" stroke="#8060b8" stroke-width="1.6"/>
<path d="M12 104Q30 108 52 125" fill="none" stroke="#b098d8" stroke-width="5"/>
<path d="M51 76Q57 84 56 96" fill="none" stroke="#a8e8e0" stroke-width="2.5"/>
<path d="M12 128Q26 130 38 140Q22 143 12 137Z" fill="#e8a8e4"/>
<path d="M89 119Q100 97 129 88Q142 84 149 83Q140 94 126 100Q158 96 168 108Q166 128 168 150Q160 168 150 172Q140 150 124 142Q104 134 89 126Z" fill="#dcd0ee"/>
<path d="M98 110Q125 96 158 96" fill="none" stroke="#c8f0e8" stroke-width="5"/>
<path d="M92 124Q120 112 162 118" fill="none" stroke="#b8a0dc" stroke-width="5"/>
<path d="M89 119Q100 97 129 88Q142 84 149 83" fill="none" stroke="#6a4aa0" stroke-width="2.4"/>
<path d="M116 126Q138 122 156 136Q146 144 128 140Z" fill="#f0a8dc"/>
<path d="M158 110L170 128L160 132L170 150L156 158L166 172" fill="none" stroke="#8a68c0" stroke-width="2"/>
<path d="M149 155Q138 180 142 211" fill="none" stroke="#7a58b8" stroke-width="2.4"/>
<path d="M154 158Q144 186 147 210" fill="none" stroke="#98d8d0" stroke-width="2.2"/>
<path d="M140 196Q130 204 120 198Q110 190 114 183Q118 178 123 182" fill="none" stroke="#7a58b8" stroke-width="2.2"/>
<path d="M142 202Q132 212 118 206" fill="none" stroke="#98d8d0" stroke-width="2"/>
<path d="M70 92L72 105M64 98L70 108M80 98L73 108" stroke="#fff" stroke-width="2.2" fill="none"/>
<circle cx="71" cy="121" r="2.4" fill="#7050a8"/>
<ellipse cx="33" cy="123" rx="9" ry="5" fill="#eeeeee"/>
<circle cx="33" cy="123" r="5" fill="#8aa0b0"/><circle cx="33" cy="122" r="2" fill="#202030"/>
<ellipse cx="108" cy="138" rx="11" ry="6" fill="#eeeeee"/>
<circle cx="108" cy="138" r="6" fill="#8aa0b0"/><circle cx="109" cy="137" r="2.2" fill="#301020"/>
<circle cx="21" cy="145" r="1" fill="#fff"/><circle cx="26" cy="146" r="1" fill="#fff"/><circle cx="31" cy="145" r="1" fill="#fff"/>
<circle cx="96" cy="154" r="1.2" fill="#fff"/><circle cx="102" cy="161" r="1.1" fill="#fff"/><circle cx="107" cy="163" r="1" fill="#fff"/>
<path d="M46 178Q52 160 64 162Q80 166 82 180Q80 188 62 188Q46 188 46 178Z" fill="#ecd2ba"/>
<path d="M50 184Q62 190 78 184" fill="none" stroke="#d0a890" stroke-width="1.5"/>
<path d="M37 206Q56 198 84 212Q76 223 56 223Q42 221 37 206Z" fill="#6a3aa8"/>
<path d="M46 214Q62 216 76 213" stroke="#c0a0e0" stroke-width="1.6"/>
</g>
<rect width="202" height="309" fill="url(#vig)"/>
</svg><div class="r" style="left:524px;top:765px;width:1396px;height:23px;background:#dadada;border:1px solid #c4c4c4;box-sizing:border-box;"></div><div class="t" style="left:529px;top:770px;font-size:14px;color:#000;">Info</div><svg class="r" style="left:1889px;top:771px" width="10" height="10" viewBox="0 0 10 10"><rect x="0.5" y="3.5" width="6" height="6" fill="none" stroke="#000" stroke-width="1.2"/><path d="M3 3.5V0.8H9.2V6.8H6.5" fill="none" stroke="#000" stroke-width="1.2"/><rect x="0.5" y="3.5" width="6" height="1.5" fill="#000"/><rect x="3" y="0.6" width="6" height="1.5" fill="#000"/></svg><svg class="r" style="left:1906px;top:772px" width="10" height="10" viewBox="0 0 10 10"><path d="M1.5 1.5L8.5 8.5M8.5 1.5L1.5 8.5" stroke="#000" stroke-width="1.7"/></svg><div class="r" style="left:525px;top:791px;width:88px;height:25px;background:#fff;border:1px solid #d9d9d9;border-bottom:none;box-sizing:border-box;"></div><div class="r" style="left:613px;top:792px;width:86px;height:23px;background:#f0f0f0;border:1px solid #d9d9d9;border-bottom:none;border-left:none;box-sizing:border-box;"></div><div class="r" style="left:699px;top:792px;width:74px;height:23px;background:#f0f0f0;border:1px solid #d9d9d9;border-bottom:none;border-left:none;box-sizing:border-box;"></div><div class="t" style="left:539px;top:797px;font-size:13px;color:#000;">Properties</div><div class="t" style="left:627px;top:798px;font-size:13px;color:#000;">Histogram</div><div class="t" style="left:715px;top:798px;font-size:13px;color:#000;">ExifTool</div><div class="r" style="left:525px;top:815px;width:1391px;height:281px;background:#fff;border:1px solid #868686;box-sizing:border-box;"></div><div class="r" style="left:526px;top:816px;width:1369px;height:281px;overflow:hidden;"><svg class="r" style="left:7px;top:8px" width="12" height="8" viewBox="0 0 12 8"><path d="M1.5 1.5L6 6L10.5 1.5" fill="none" stroke="#404040" stroke-width="1.6"/></svg><div class="t" style="left:29px;top:4px;font-size:15px;color:#000;font-weight:bold;">File</div><div class="r" style="left:0px;top:22px;width:1369px;height:22px;background:#f5f5f5;"></div><div class="t" style="left:54px;top:26px;font-size:15px;color:#000;">Filename</div><div class="t" style="left:200px;top:26px;font-size:15px;color:#000;">pintacaras mariposa.jpg</div><div class="t" style="left:54px;top:48px;font-size:15px;color:#000;">Filepath</div><div class="t" style="left:200px;top:48px;font-size:15px;color:#000;">D:\Users\Yo\Desktop</div><div class="r" style="left:0px;top:66px;width:1369px;height:22px;background:#f5f5f5;"></div><div class="t" style="left:54px;top:70px;font-size:15px;color:#000;">Description</div><div class="t" style="left:200px;top:70px;font-size:15px;color:#000;">JPG Bitmap file</div><div class="t" style="left:54px;top:92px;font-size:15px;color:#000;">File size</div><div class="t" style="left:200px;top:92px;font-size:15px;color:#000;">17.78 KiB (18.208)</div><div class="r" style="left:0px;top:110px;width:1369px;height:22px;background:#f5f5f5;"></div><div class="t" style="left:54px;top:114px;font-size:15px;color:#000;">Creation date/time</div><div class="t" style="left:200px;top:114px;font-size:15px;color:#000;">15/02/2017 - 19:45:37</div><div class="t" style="left:54px;top:136px;font-size:15px;color:#000;">Modified date/time</div><div class="t" style="left:200px;top:136px;font-size:15px;color:#000;">15/02/2017 - 19:45:51</div><div class="r" style="left:0px;top:154px;width:1369px;height:22px;background:#f5f5f5;"></div><div class="t" style="left:54px;top:158px;font-size:15px;color:#000;">Accessed date/time</div><div class="t" style="left:200px;top:158px;font-size:15px;color:#000;">15/02/2017 - 19:45:37</div><div class="t" style="left:54px;top:180px;font-size:15px;color:#000;">Rating</div><div class="t" style="left:200px;top:180px;font-size:15px;color:#000;">Unrated</div><div class="r" style="left:0px;top:198px;width:1369px;height:22px;background:#f5f5f5;"></div><div class="t" style="left:54px;top:202px;font-size:15px;color:#000;">Colour Label</div><div class="t" style="left:200px;top:202px;font-size:15px;color:#000;">Uncolored</div><div class="t" style="left:54px;top:224px;font-size:15px;color:#000;">File&#x27;s icon</div><svg class="r" style="left:201px;top:223px" width="16" height="16" viewBox="0 0 16 16"><path d="M2 0.5H10.5L14 4V15.5H2Z" fill="#c04a10"/><circle cx="8" cy="7" r="3.2" fill="#f8e0c8"/><circle cx="8" cy="7" r="1.6" fill="#c04a10"/><rect x="4.5" y="11.5" width="7" height="2" fill="#f0a070"/></svg><div class="t" style="left:225px;top:224px;font-size:15px;color:#000;">C:/Program Files/XnViewMP/FileIcons/jpg.ico</div><div class="r" style="left:0px;top:242px;width:1369px;height:22px;background:#f5f5f5;"></div><svg class="r" style="left:7px;top:250px" width="12" height="8" viewBox="0 0 12 8"><path d="M1.5 1.5L6 6L10.5 1.5" fill="none" stroke="#404040" stroke-width="1.6"/></svg><div class="t" style="left:29px;top:246px;font-size:15px;color:#000;font-weight:bold;">Image</div><div class="t" style="left:54px;top:268px;font-size:15px;color:#000;">Format</div><div class="t" style="left:200px;top:268px;font-size:15px;color:#000;">JPEG TrueColor (v1.1)</div></div><div class="r" style="left:1895px;top:816px;width:20px;height:279px;background:#f0f0f0;"></div><svg class="r" style="left:1899px;top:823px" width="10" height="7" viewBox="0 0 10 7"><path d="M0.8 6L5 1.5L9.2 6" fill="none" stroke="#606060" stroke-width="1.6"/></svg><div class="r" style="left:1896px;top:837px;width:17px;height:117px;background:#cdcdcd;"></div><svg class="r" style="left:1899px;top:1081px" width="10" height="7" viewBox="0 0 10 7"><path d="M0.8 1L5 5.5L9.2 1" fill="none" stroke="#606060" stroke-width="1.6"/></svg><div class="t" style="left:3px;top:1105px;font-size:15px;color:#000;letter-spacing:-0.063px;">34 object(s) / 1 object(s) selected [17.78 KiB]</div><div class="t" style="left:307px;top:1105px;font-size:15px;color:#000;letter-spacing:-0.055px;">pintacaras mariposa.jpg</div><div class="t" style="left:474px;top:1105px;font-size:15px;color:#000;letter-spacing:-0.388px;">236x361x24 (1.53)</div><div class="t" style="left:601px;top:1105px;font-size:15px;color:#000;letter-spacing:-0.495px;">3.28x5.01 inches</div><div class="t" style="left:716px;top:1105px;font-size:15px;color:#000;letter-spacing:-0.672px;">17.78 KiB</div><div class="t" style="left:784px;top:1105px;font-size:15px;color:#000;letter-spacing:-1.01px;">85%</div><div class="r" style="left:301px;top:1103px;width:1px;height:19px;background:#d8d8d8;"></div><div class="r" style="left:468px;top:1103px;width:1px;height:19px;background:#d8d8d8;"></div><div class="r" style="left:596px;top:1103px;width:1px;height:19px;background:#d8d8d8;"></div><div class="r" style="left:710px;top:1103px;width:1px;height:19px;background:#d8d8d8;"></div><div class="r" style="left:778px;top:1103px;width:1px;height:19px;background:#d8d8d8;"></div><div class="r" style="left:813px;top:1103px;width:1px;height:19px;background:#d8d8d8;"></div><div class="r" style="left:1px;top:1122px;width:99px;height:28px;background:#fff;"></div><div class="t" style="left:15px;top:1130px;font-size:14px;color:#000;letter-spacing:-0.694px;">Browser</div><svg class="r" style="left:68px;top:1129px" width="14" height="14" viewBox="0 0 14 14"><rect x="0.5" y="0.5" width="13" height="13" rx="2" fill="#e8785a" stroke="#c85838"/><path d="M4 4L10 10M10 4L4 10" stroke="#fff" stroke-width="1.8"/></svg><div class="r" style="left:0px;top:1150px;width:1920px;height:50px;background:#172008;"></div><div class="r" style="left:620px;top:1150px;width:61px;height:50px;background:#4a4f3e;"></div><div class="r" style="left:253px;top:1197px;width:50px;height:3px;background:#9ab8a8;"></div><div class="r" style="left:315px;top:1197px;width:50px;height:3px;background:#9ab8a8;"></div><div class="r" style="left:620px;top:1197px;width:61px;height:3px;background:#9ab8a8;"></div><div class="r" style="left:750px;top:1197px;width:50px;height:3px;background:#9ab8a8;"></div><svg class="r" style="left:19px;top:1165px" width="22" height="21" viewBox="0 0 22 21"><g fill="#fff"><path d="M0 3L9 1.8V10H0Z"/><path d="M10 1.6L21 0V10H10Z"/><path d="M0 11H9V19.2L0 18Z"/><path d="M10 11H21V21L10 19.4Z"/></g></svg><svg class="r" style="left:78px;top:1164px" width="25" height="20" viewBox="0 0 25 20"><rect x="4.5" y="0.5" width="15" height="19" fill="none" stroke="#fff" stroke-width="1.2"/><path d="M2.5 3.5H0.5V16.5H2.5M21.5 3.5H23.5V16.5H21.5" fill="none" stroke="#fff" stroke-width="1.1"/></svg><svg class="r" style="left:142px;top:1163px" width="23" height="23" viewBox="0 0 23 23"><polygon points="22.50,11.50 22.29,13.65 18.89,14.56 18.15,15.94 19.28,19.28 17.61,20.65 14.56,18.89 13.06,19.35 11.50,22.50 9.35,22.29 8.44,18.89 7.06,18.15 3.72,19.28 2.35,17.61 4.11,14.56 3.65,13.06 0.50,11.50 0.71,9.35 4.11,8.44 4.85,7.06 3.72,3.72 5.39,2.35 8.44,4.11 9.94,3.65 11.50,0.50 13.65,0.71 14.56,4.11 15.94,4.85 19.28,3.72 20.65,5.39 18.89,8.44 19.35,9.94" fill="#fff" stroke="#fff" stroke-width="0.8"/><circle cx="11.5" cy="11.5" r="3.8" fill="none" stroke="#172008" stroke-width="3"/></svg><svg class="r" style="left:202px;top:1164px" width="28" height="20" viewBox="0 0 28 20"><rect x="0" y="0" width="28" height="20" fill="#38a8e8"/><rect x="1" y="1" width="26" height="18" fill="#5ac0f0"/><circle cx="8" cy="8" r="5" fill="#f0f0f0"/><path d="M8 8V3A5 5 0 0 1 13 8Z" fill="#f8a020"/><path d="M15 4h9M15 7h9M15 10h9M15 13h9" stroke="#fff" stroke-width="1.5"/><rect x="3" y="15" width="12" height="2" fill="#ffd860"/></svg><svg class="r" style="left:264px;top:1163px" width="28" height="23" viewBox="0 0 28 23"><path d="M0 2H9L11 4H28V23H0Z" fill="#e8b840"/><rect x="0" y="6" width="28" height="17" fill="#ffd868"/><path d="M7 23V13H21V23H17V17H11V23Z" fill="#2a8ad8"/><rect x="1" y="3" width="4" height="1" fill="#fff"/></svg><svg class="r" style="left:326px;top:1161px" width="28" height="28" viewBox="0 0 28 28"><circle cx="14" cy="14" r="13.5" fill="#db4437"/><path d="M14 14L2.3 20.75A13.5 13.5 0 0 0 14 27.5L20.75 14Z" fill="#0f9d58"/><path d="M14 14L2.3 7.25A13.5 13.5 0 0 0 2.3 20.75Z" fill="#0f9d58"/><path d="M14 14H27.5A13.5 13.5 0 0 1 14 27.5Z" fill="#ffcd40"/><circle cx="14" cy="14" r="6.3" fill="#fff"/><circle cx="14" cy="14" r="4.8" fill="#4285f4"/></svg><svg class="r" style="left:388px;top:1161px" width="29" height="29" viewBox="0 0 29 29"><circle cx="14.5" cy="14" r="13" fill="#1a5ab8"/><path d="M5 6Q14 0 24 6Q28 14 22 22Q14 16 5 6Z" fill="#4a90e0"/><path d="M4 14L14 21L25 14V25H4Z" fill="#e8e8e8" stroke="#a0a0a0" stroke-width="0.6"/><path d="M4 14L14 21L25 14" fill="none" stroke="#909090"/></svg><svg class="r" style="left:449px;top:1161px" width="30" height="30" viewBox="0 0 30 30"><rect x="2" y="4" width="5" height="24" fill="#7a3a20"/><rect x="8" y="2" width="5" height="26" fill="#607080"/><rect x="14" y="1" width="4" height="27" fill="#d8c070"/><path d="M19 10L24 8L28 28H23Z" fill="#4a8ae8"/><path d="M3 8h3M3 12h3" stroke="#e8a060" stroke-width="0.8"/></svg><svg class="r" style="left:512px;top:1161px" width="28" height="28" viewBox="0 0 28 28"><rect x="11" y="3" width="16" height="22" fill="#fff" stroke="#2b579a"/><path d="M14 8h10M14 11h10M14 14h10M14 17h10M14 20h10" stroke="#2b579a" stroke-width="1.2"/><path d="M0 4L15 1V27L0 24Z" fill="#2b579a"/><path d="M2.5 9L4.5 19L7 12L9.5 19L11.5 9" fill="none" stroke="#fff" stroke-width="1.6"/></svg><svg class="r" style="left:573px;top:1161px" width="28" height="28" viewBox="0 0 28 28"><rect x="11" y="3" width="16" height="22" fill="#fff" stroke="#217346"/><path d="M14 8h10M14 11h10M14 14h10M14 17h10M14 20h10M19 5V23" stroke="#217346" stroke-width="1.1"/><path d="M0 4L15 1V27L0 24Z" fill="#217346"/><path d="M3 9L10 19M10 9L3 19" stroke="#fff" stroke-width="2"/></svg><svg class="r" style="left:635px;top:1159px" width="31" height="29" viewBox="0 0 31 29"><g fill="#f4a020"><ellipse cx="7" cy="11" rx="3.2" ry="4" transform="rotate(-40 7 11)"/><ellipse cx="12.5" cy="6.5" rx="3" ry="3.8"/><ellipse cx="18.5" cy="6.5" rx="3" ry="3.8"/><ellipse cx="24" cy="11" rx="3.2" ry="4" transform="rotate(40 24 11)"/><path d="M2 17Q6 10 15.5 10Q25 10 29 17Q26 27 15.5 28Q5 27 2 17Z"/></g><circle cx="15.5" cy="18" r="7" fill="#b86810"/><circle cx="15.5" cy="18" r="5.6" fill="#f8c040"/><circle cx="15.5" cy="18" r="4.2" fill="#c02010"/><circle cx="15" cy="17" r="1.5" fill="#f06040"/></svg><svg class="r" style="left:697px;top:1160px" width="29" height="29" viewBox="0 0 29 29"><rect x="0" y="0" width="29" height="29" fill="#3a5870"/><rect x="1.5" y="1.5" width="26" height="26" fill="#0a1e2c"/><path d="M7 7V21H14M17 12V21M17 14Q19 12 22 12" stroke="#a8d8f8" stroke-width="2" fill="none"/></svg><svg class="r" style="left:760px;top:1161px" width="30" height="30" viewBox="0 0 30 30"><rect x="2" y="4" width="5" height="24" fill="#7a3a20"/><rect x="8" y="2" width="5" height="26" fill="#607080"/><rect x="14" y="1" width="4" height="27" fill="#d8c070"/><path d="M19 10L24 8L28 28H23Z" fill="#4a8ae8"/><path d="M3 8h3M3 12h3" stroke="#e8a060" stroke-width="0.8"/></svg><svg class="r" style="left:1679px;top:1170px" width="17" height="10" viewBox="0 0 17 10"><path d="M1 9L8.5 1.5L16 9" fill="none" stroke="#fff" stroke-width="1.3"/></svg><svg class="r" style="left:1709px;top:1167px" width="18" height="16" viewBox="0 0 18 16"><g fill="none" stroke="#fff" stroke-width="1.1"><path d="M1 15A15 15 0 0 1 16 1"/><path d="M4 15A12 12 0 0 1 15 4"/><path d="M7 15A9 9 0 0 1 14 7"/></g><circle cx="14" cy="14" r="1.6" fill="#fff"/></svg><svg class="r" style="left:1736px;top:1165px" width="22" height="20" viewBox="0 0 22 20"><path d="M1 6H5L10 1V19L5 14H1Z" fill="none" stroke="#fff" stroke-width="1.2"/><path d="M13 7Q15 10 13 13M15.5 5Q19 10 15.5 15M18 3Q23 10 18 17" fill="none" stroke="#c8c8c0" stroke-width="1"/></svg><div class="t" style="left:1790px;top:1156px;font-size:15px;color:#fff;">22:07</div><div class="t" style="left:1770px;top:1179px;font-size:15px;color:#fff;">30/03/2017</div><svg class="r" style="left:1868px;top:1164px" width="23" height="20" viewBox="0 0 23 20"><path d="M0.8 0.8H21.2V15.2H14L11 18.5L8 15.2H0.8Z" fill="none" stroke="#fff" stroke-width="1.3"/></svg><div class="r" style="left:1914px;top:1150px;width:1px;height:50px;background:#6a6a60;"></div></body></html>
